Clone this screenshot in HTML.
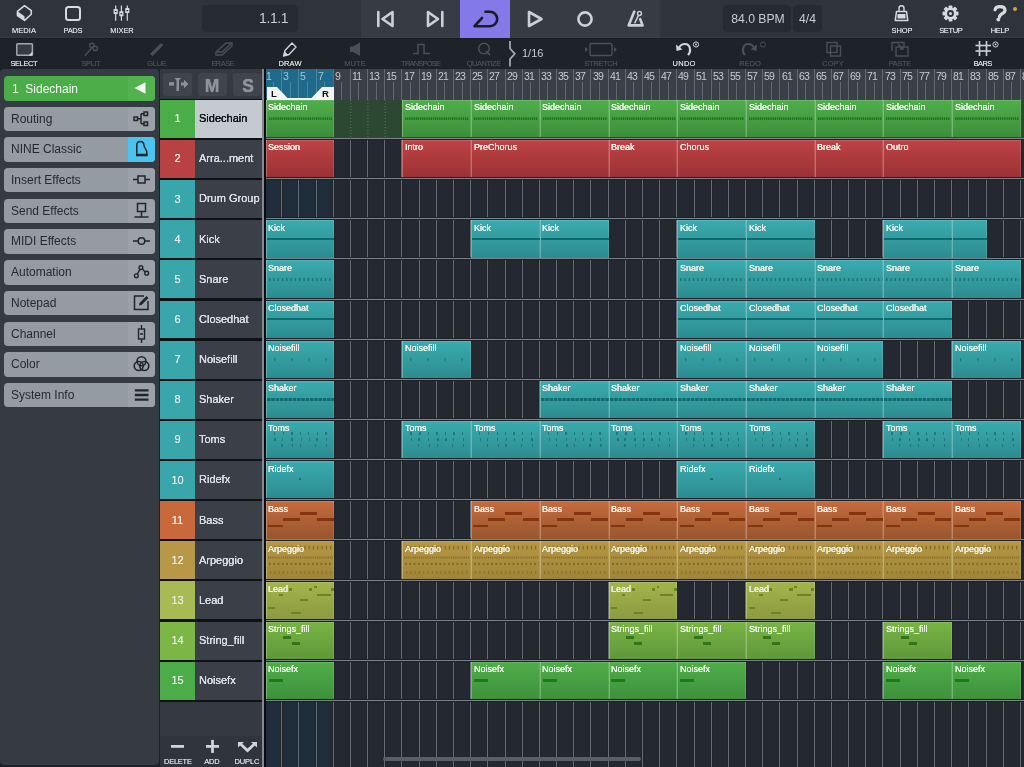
<!DOCTYPE html><html><head><meta charset="utf-8"><style>
*{margin:0;padding:0;box-sizing:border-box}
html,body{-webkit-font-smoothing:antialiased;width:1024px;height:767px;overflow:hidden;background:#1d2127;font-family:"Liberation Sans",sans-serif}
.a{position:absolute}
.lbl{position:absolute;font-size:7.5px;font-weight:normal;text-shadow:0 0 0.4px currentColor;color:#d3d6da;text-align:center;width:60px;will-change:transform}
.dim{color:#474c54}
.clip{position:absolute;overflow:hidden}
.ct{position:absolute;left:2.6px;top:2.4px;font-size:9px;font-weight:normal;text-shadow:0 0 0.4px #e9eee6,0 0 0.4px #e9eee6;color:#e9eee6;white-space:nowrap}
.tn{position:absolute;font-size:11px;font-weight:normal;text-shadow:0 0 0.5px currentColor,0 0 0.5px currentColor;color:#d9dde1;white-space:nowrap}
.num{position:absolute;font-size:11px;font-weight:normal;text-shadow:0 0 0.4px currentColor;color:#e3e9e1;text-align:center;width:35px}
.lb{position:absolute;left:4px;width:151px;height:24.4px;border-radius:4px;background:#959ba3;overflow:hidden}
.lb .r{position:absolute;right:0;top:0;width:27px;height:100%;background:#9ba1a8}
.lb .t{position:absolute;left:7.3px;top:5px;font-size:12px;color:#262a30;white-space:nowrap}
.txt,.tn,.num,.rn,.ct,.lb .t{will-change:transform}
.rn{position:absolute;top:70.3px;font-size:10.5px;color:#c8cbcf;white-space:nowrap;letter-spacing:-0.9px}
</style></head><body><div id="root" style="position:absolute;left:0;top:0;width:1024px;height:767px;overflow:hidden;transform:translateZ(0)">
<div class="a" style="left:0;top:0;width:1024px;height:38px;background:#2f343c"></div>
<div class="a" style="left:360px;top:0;width:300px;height:38px;background:#363b44"></div>
<div class="a" style="left:460px;top:0;width:50px;height:38px;background:#8379e8"></div>
<div class="a" style="left:0;top:38px;width:1024px;height:31px;background:#1e2229"></div>
<div class="a" style="left:0;top:36.5px;width:1024px;height:1.5px;background:rgba(255,255,255,0.035)"></div>
<div class="a" style="left:0;top:38px;width:1024px;height:1px;background:#191c21"></div>
<div class="a" style="left:359.5px;top:0;width:1px;height:38px;background:rgba(0,0,0,0.12)"></div>
<svg class="a" style="left:14px;top:4px" width="20" height="18" viewBox="0 0 20 18">
<path d="M10.5 1.7 L17.3 6.6 V10.2 L10.5 16.4 L3.4 11.6 V7.3 Z" fill="none" stroke="#d7dade" stroke-width="1.5" stroke-linejoin="round"/>
<path d="M3.4 7.3 L10.5 12.2 L10.5 16.4 L3.4 11.6 Z" fill="#d7dade"/>
</svg>
<div class="lbl" style="left:-5.9px;top:25.5px;letter-spacing:0.05px;text-indent:0.05px">MEDIA</div>
<div class="a" style="left:65.4px;top:5.6px;width:15.4px;height:15.2px;border:2px solid #d7dade;border-radius:3.5px"></div>
<div class="lbl" style="left:42.9px;top:25.5px;letter-spacing:-0.34px;text-indent:-0.34px">PADS</div>
<svg class="a" style="left:112px;top:4px" width="20" height="18" viewBox="0 0 20 18">
<g stroke="#d7dade" stroke-width="1.2"><line x1="3.7" y1="1.5" x2="3.7" y2="16.8"/><line x1="9.4" y1="1.5" x2="9.4" y2="16.8"/><line x1="15.3" y1="1.5" x2="15.3" y2="16.8"/></g>
<g fill="#d7dade"><rect x="1.6" y="5" width="4.2" height="5" rx="0.6"/><rect x="7.3" y="7.2" width="4.2" height="5" rx="0.6"/><rect x="13.2" y="4.1" width="4.2" height="5" rx="0.6"/></g>
<g fill="#2f343c"><rect x="2.8" y="6.9" width="1.8" height="1.2"/><rect x="8.5" y="9.1" width="1.8" height="1.2"/><rect x="14.4" y="6" width="1.8" height="1.2"/></g>
</svg>
<div class="lbl" style="left:91.6px;top:25.5px;letter-spacing:-0.05px;text-indent:-0.05px">MIXER</div>
<div class="a" style="left:202px;top:5px;width:96px;height:27px;background:#262a31;border-radius:4px"></div>
<div class="a txt" style="left:200px;top:10.3px;width:88px;text-align:right;font-size:14px;letter-spacing:-0.45px;color:#c9ccd0">1.1.1</div>
<svg class="a" style="left:370px;top:8px" width="290" height="22" viewBox="0 0 290 22">
<g fill="none" stroke="#cdd0d4" stroke-width="2.6" stroke-linejoin="round" stroke-linecap="round">
<line x1="8.3" y1="4" x2="8.3" y2="18"/><path d="M22.5 4 L12.5 11 L22.5 18 Z"/>
<path d="M58 4 L68 11 L58 18 Z"/><line x1="72.3" y1="4" x2="72.3" y2="18"/>
<path d="M159 4 L171.5 11 L159 18 Z"/>
<circle cx="215" cy="11" r="6.6"/>
</g>
<path d="M115.5 3.8 H120 A7.2 7.2 0 0 1 120 18.2 H104.5 L112 10" fill="none" stroke="#1b1d24" stroke-width="2.6" stroke-linecap="round" stroke-linejoin="round"/>
<path d="M264.3 3.6 L258.6 17.4 H272.6 L270.2 11.2" fill="none" stroke="#cdd0d4" stroke-width="2.6" stroke-linejoin="round" stroke-linecap="round"/>
<line x1="264.6" y1="15.3" x2="268.6" y2="7.2" stroke="#cdd0d4" stroke-width="1.5"/>
<circle cx="269.5" cy="5.5" r="1.9" fill="#1d1f26" stroke="#cdd0d4" stroke-width="1.5"/>
</svg>
<div class="a" style="left:723px;top:5px;width:68px;height:27px;background:#262a31;border-radius:4px"></div>
<div class="a" style="left:793px;top:5px;width:29px;height:27px;background:#262a31;border-radius:4px"></div>
<div class="a txt" style="left:723.5px;top:12px;width:68px;text-align:center;font-size:12.2px;color:#c9ccd0">84.0 BPM</div>
<div class="a txt" style="left:793px;top:12px;width:29px;text-align:center;font-size:12.2px;color:#c9ccd0">4/4</div>
<svg class="a" style="left:893px;top:4px" width="17" height="18" viewBox="0 0 17 18">
<path d="M6 7.5 V4 C6 1 11 1 11 4 V7.5" fill="none" stroke="#d7dade" stroke-width="1.4"/>
<path d="M3.5 7.5 H13.5 L14.8 16.6 H2.2 Z" fill="none" stroke="#d7dade" stroke-width="1.5" stroke-linejoin="round"/>
<rect x="4.5" y="10" width="8" height="4.5" fill="#d7dade"/>
</svg>
<div class="lbl" style="left:872.0px;top:25.5px;letter-spacing:-0.09px;text-indent:-0.09px">SHOP</div>
<svg class="a" style="left:942.2px;top:4.7px" width="17" height="17" viewBox="0 0 17 17">
<g transform="translate(8.5 8.5)" fill="#d7dade">
<circle r="6"/>
<g id="t"><rect x="-1.9" y="-8" width="3.8" height="3.5" rx="0.8"/></g>
<use href="#t" transform="rotate(45)"/><use href="#t" transform="rotate(90)"/><use href="#t" transform="rotate(135)"/>
<use href="#t" transform="rotate(180)"/><use href="#t" transform="rotate(225)"/><use href="#t" transform="rotate(270)"/><use href="#t" transform="rotate(315)"/>
<circle r="3.4" fill="#2f343c"/><circle r="1.5" fill="#d7dade"/>
</g></svg>
<div class="lbl" style="left:920.7px;top:25.5px;letter-spacing:-0.38px;text-indent:-0.38px">SETUP</div>
<svg class="a" style="left:990px;top:4px" width="20" height="20" viewBox="0 0 20 20">
<path d="M5 5.8 C5.5 3.3 7.5 2.6 10 2.6 C13 2.6 15 4 15 6.3 C15 8.6 12.8 9.3 11.2 10.3 C10 11 9.6 11.8 9.4 13" fill="none" stroke="#d7dade" stroke-width="3.2" stroke-linecap="round"/>
<circle cx="8.3" cy="15.6" r="1.9" fill="#d7dade"/>
</svg>
<div class="a" style="left:1013px;top:6.5px;width:4px;height:4px;border-radius:2px;background:#d3a53c"></div>
<div class="lbl" style="left:969.5px;top:25.5px;letter-spacing:-0.28px;text-indent:-0.28px">HELP</div>
<div class="lbl" style="left:-5.8px;top:58.8px;letter-spacing:-0.41px;text-indent:-0.41px">SELECT</div>
<div class="lbl dim" style="left:60.6px;top:58.8px;letter-spacing:-0.43px;text-indent:-0.43px">SPLIT</div>
<div class="lbl dim" style="left:126.6px;top:58.8px;letter-spacing:-0.33px;text-indent:-0.33px">GLUE</div>
<div class="lbl dim" style="left:193.0px;top:58.8px;letter-spacing:-0.55px;text-indent:-0.55px">ERASE</div>
<div class="lbl" style="left:259.5px;top:58.8px;letter-spacing:0.14px;text-indent:0.14px">DRAW</div>
<div class="lbl dim" style="left:325.0px;top:58.8px;letter-spacing:0.06px;text-indent:0.06px">MUTE</div>
<div class="lbl dim" style="left:391.3px;top:58.8px;letter-spacing:-0.81px;text-indent:-0.81px">TRANSPOSE</div>
<div class="lbl dim" style="left:454.0px;top:58.8px;letter-spacing:-0.50px;text-indent:-0.50px">QUANTIZE</div>
<div class="lbl dim" style="left:571.0px;top:58.8px;letter-spacing:-0.32px;text-indent:-0.32px">STRETCH</div>
<div class="lbl" style="left:653.5px;top:58.8px;letter-spacing:0.25px;text-indent:0.25px">UNDO</div>
<div class="lbl dim" style="left:720.0px;top:58.8px;letter-spacing:-0.04px;text-indent:-0.04px">REDO</div>
<div class="lbl dim" style="left:803.4px;top:58.8px;letter-spacing:0.01px;text-indent:0.01px">COPY</div>
<div class="lbl dim" style="left:869.5px;top:58.8px;letter-spacing:-0.43px;text-indent:-0.43px">PASTE</div>
<div class="lbl" style="left:953.0px;top:58.8px;letter-spacing:-0.62px;text-indent:-0.62px">BARS</div>
<svg class="a" style="left:0;top:38px" width="1024" height="30" viewBox="0 0 1024 30">
<rect x="16.8" y="5.7" width="15.6" height="11.6" rx="0.8" fill="#363b44" stroke="#a3a8ae" stroke-width="1.5"/>
<path d="M28.6 17.4 L32.4 13.6 L32.4 17.4 Z" fill="#d3d6da"/>
<g fill="none" stroke="#4d525a" stroke-width="1.3" stroke-linecap="round">
<circle cx="91.8" cy="7.3" r="2.2"/><circle cx="95.3" cy="10.3" r="2.2"/><line x1="85.3" y1="17.3" x2="91.6" y2="10.2"/>
</g>
<path d="M150 16 L160 6 C161.5 4.5 164 6 162.5 8 L152.5 18 Z" fill="#4b5058"/>
<path d="M216 14 L226 5 L232 5 L232 8 L222 17 L216 17 Z" fill="none" stroke="#4b5058" stroke-width="1.4"/>
<path d="M216 14 L222 14 L232 5" fill="none" stroke="#4b5058" stroke-width="1.4"/>
<path d="M283.5 18 L285 12.5 L292 5 L296 9 L289 16.5 Z" fill="none" stroke="#d0d3d7" stroke-width="1.4" stroke-linejoin="round"/>
<path d="M283.5 18 L284.8 13.5 L288.5 17 Z" fill="#d0d3d7"/>
<path d="M350 8.5 L353 8.5 L360 4.5 L360 18 L353 14 L350 14 Z" fill="#4b5058"/>
<path d="M413 15.5 L418 15.5 L418 6.5 L424 6.5 L424 15.5 L430 15.5" fill="none" stroke="#4b5058" stroke-width="1.5"/>
<circle cx="484" cy="10.5" r="5.3" fill="none" stroke="#4b5058" stroke-width="1.5"/><line x1="486" y1="13" x2="490" y2="17" stroke="#4b5058" stroke-width="1.6"/>
<path d="M510 3 V10.5 L514.8 15.8 L510 21.1 V28.6" fill="none" stroke="#a3a7ac" stroke-width="1.8"/>
<rect x="590" y="5.5" width="22" height="12" rx="1.5" fill="none" stroke="#4b5058" stroke-width="1.4"/>
<path d="M588 11.5 L585 9 L585 14 Z M614 9 L617 11.5 L614 14 Z" fill="#4b5058"/>
<path d="M679 10 C681 5 689 4 690 11 C690.5 14 689 16 688 17" fill="none" stroke="#d0d3d7" stroke-width="2.2"/>
<path d="M676 6.5 L676.5 13 L682.5 11.5 Z" fill="#d0d3d7"/>
<circle cx="696" cy="6.5" r="2.6" fill="none" stroke="#d0d3d7" stroke-width="1"/><circle cx="696" cy="6.5" r="0.9" fill="#d0d3d7"/>
<path d="M754 10 C752 5 744 4 743 11 C742.5 14 744 16 745 17" fill="none" stroke="#4b5058" stroke-width="2.2"/>
<path d="M757 6.5 L756.5 13 L750.5 11.5 Z" fill="#4b5058"/>
<circle cx="763" cy="6.5" r="2.6" fill="none" stroke="#4b5058" stroke-width="1"/>
<g fill="none" stroke="#4b5058" stroke-width="1.4"><rect x="827" y="4.5" width="10" height="10"/><rect x="830.5" y="8" width="10" height="10"/></g>
<g fill="none" stroke="#4b5058" stroke-width="1.4"><path d="M892 13 L892 4.5 L904 4.5 L904 8"/><rect x="896" y="9" width="12" height="9"/><path d="M898 6 L903 11 M903 8 L903 11 L900 11"/></g>
<g stroke="#cdd0d4" stroke-width="1.6"><line x1="975.5" y1="7.5" x2="991" y2="7.5"/><line x1="975.5" y1="13" x2="991" y2="13"/><line x1="979.5" y1="3" x2="979.5" y2="18"/><line x1="986.5" y1="3" x2="986.5" y2="18"/></g>
<circle cx="995.5" cy="6.5" r="2.6" fill="none" stroke="#d0d3d7" stroke-width="1"/><circle cx="995.5" cy="6.5" r="0.9" fill="#d0d3d7"/>
</svg>
<div class="a txt" style="left:521.5px;top:46.5px;font-size:11px;color:#c9ccd0">1/16</div>
<div class="a" style="left:0;top:69px;width:158.7px;height:696px;background:#353a43;border-radius:4px"></div>
<div class="a" style="left:4px;top:75.8px;width:151px;height:24.9px;border-radius:4px;background:#4bad48;overflow:hidden"><div class="a" style="right:0;top:0;width:27px;height:100%;background:#52b34e"></div></div>
<svg class="a" style="left:134px;top:82px" width="12" height="12" viewBox="0 0 12 12"><path d="M0.5 6 L11.5 0.3 L11.5 11.7 Z" fill="#f2f5f2"/></svg>
<div class="a txt" style="left:11.5px;top:81.7px;font-size:12px;color:#f2f5f2;white-space:nowrap">1&nbsp;&nbsp;Sidechain</div>
<div class="lb" style="top:106.53px"><div class="r"></div><div class="t">Routing</div></div>
<div class="lb" style="top:137.26px"><div class="a" style="right:0;top:0;width:27px;height:100%;background:#4cc3ee"></div><div class="t">NINE Classic</div></div>
<div class="lb" style="top:167.99px"><div class="r"></div><div class="t">Insert Effects</div></div>
<div class="lb" style="top:198.72px"><div class="r"></div><div class="t">Send Effects</div></div>
<div class="lb" style="top:229.45px"><div class="r"></div><div class="t">MIDI Effects</div></div>
<div class="lb" style="top:260.18px"><div class="r"></div><div class="t">Automation</div></div>
<div class="lb" style="top:290.91px"><div class="r"></div><div class="t">Notepad</div></div>
<div class="lb" style="top:321.64px"><div class="r"></div><div class="t">Channel</div></div>
<div class="lb" style="top:352.37px"><div class="r"></div><div class="t">Color</div></div>
<div class="lb" style="top:383.10px"><div class="r"></div><div class="t">System Info</div></div>
<svg class="a" style="left:128px;top:106.53px" width="27" height="24" viewBox="0 0 27 24"><g stroke="#22262c" fill="none" stroke-width="1.5"><rect x="6" y="10" width="3.5" height="3.5"/><rect x="16" y="5" width="3.5" height="3.5"/><rect x="16" y="15" width="3.5" height="3.5"/><path d="M9.5 11.8 H13 M13 6.8 V16.8 M13 6.8 H16 M13 16.8 H16"/></g></svg>
<svg class="a" style="left:128px;top:137.26px" width="27" height="24" viewBox="0 0 27 24"><path d="M8.8 17.5 V8.2 C8.8 5.2 10.5 4.6 12.4 4.6 C15 4.6 15.9 6.6 16.2 9 C16.5 11.6 18.8 12.3 18.8 15 V17.5 Z" stroke="#22262c" fill="none" stroke-width="1.5" stroke-linejoin="round"/><rect x="8" y="17" width="11.6" height="2.3" fill="#22262c"/></svg>
<svg class="a" style="left:128px;top:167.99px" width="27" height="24" viewBox="0 0 27 24"><g stroke="#22262c" fill="none" stroke-width="1.5"><rect x="10" y="8" width="7" height="7"/><path d="M5 11.5 H10 M17 11.5 H22"/></g></svg>
<svg class="a" style="left:128px;top:198.72px" width="27" height="24" viewBox="0 0 27 24"><g stroke="#22262c" fill="none" stroke-width="1.5"><rect x="9.5" y="4.5" width="8" height="8"/><path d="M13.5 12.5 V18 M6.5 18 H20.5"/></g></svg>
<svg class="a" style="left:128px;top:229.45px" width="27" height="24" viewBox="0 0 27 24"><g stroke="#22262c" fill="none" stroke-width="1.5"><circle cx="13.5" cy="12" r="3.3"/><path d="M5 12 H10 M17 12 H22"/></g></svg>
<svg class="a" style="left:128px;top:260.18px" width="27" height="24" viewBox="0 0 27 24"><g stroke="#22262c" fill="none" stroke-width="1.4"><circle cx="8.3" cy="15.8" r="1.9"/><circle cx="12.9" cy="7.6" r="1.9"/><circle cx="18.7" cy="13.2" r="1.9"/><path d="M9.2 14.1 L12 9.3 M14.3 8.9 L17.3 11.9"/></g></svg>
<svg class="a" style="left:128px;top:290.91px" width="27" height="24" viewBox="0 0 27 24"><g stroke="#22262c" fill="none" stroke-width="1.5"><path d="M16 5 H6.5 V18.5 H20 V10"/></g><path d="M11 14.5 L11.5 12 L18.5 5 L20.5 7 L13.5 14 Z" fill="#22262c"/></svg>
<svg class="a" style="left:128px;top:321.64px" width="27" height="24" viewBox="0 0 27 24"><g stroke="#22262c" fill="none" stroke-width="1.4"><rect x="10.5" y="7" width="6" height="10"/><path d="M13.5 3 V7 M13.5 17 V21 M12 12 H15"/></g></svg>
<svg class="a" style="left:128px;top:352.37px" width="27" height="24" viewBox="0 0 27 24"><g stroke="#22262c" fill="none" stroke-width="1.6"><circle cx="13.5" cy="9.2" r="4.5"/><circle cx="10.7" cy="14" r="4.5"/><circle cx="16.3" cy="14" r="4.5"/></g></svg>
<svg class="a" style="left:128px;top:383.10px" width="27" height="24" viewBox="0 0 27 24"><g stroke="#22262c" stroke-width="2.3"><path d="M6.8 7.3 H20.5 M6.8 12 H20.5 M6.8 16.7 H20.5"/></g></svg>
<div class="a" style="left:160px;top:69px;width:102.5px;height:698px;background:#343942"></div>
<div class="a" style="left:163.4px;top:72.8px;width:28.9px;height:22.8px;background:#3f444d;border-radius:3px"></div>
<div class="a" style="left:198.4px;top:72.8px;width:28.3px;height:22.8px;background:#3f444d;border-radius:3px"></div>
<div class="a" style="left:233.0px;top:72.8px;width:28.0px;height:22.8px;background:#3f444d;border-radius:3px"></div>
<div class="a txt" style="left:198.4px;top:75.5px;width:28.3px;text-align:center;font-size:17.5px;font-weight:bold;text-shadow:0 0 0.7px #8d939a,0 0 0.7px #8d939a;color:#8d939a">M</div>
<div class="a txt" style="left:233.5px;top:75.5px;width:28px;text-align:center;font-size:17.5px;font-weight:bold;text-shadow:0 0 0.7px #8d939a,0 0 0.7px #8d939a;color:#8d939a">S</div>
<svg class="a" style="left:167px;top:76px" width="22" height="16" viewBox="0 0 22 16">
<rect x="2" y="6.2" width="5" height="3.4" fill="#8d939a"/>
<path d="M7.5 2 H14 L12 4.2 V15 H9.5 V4.2 Z" fill="#8d939a"/>
<path d="M14 6.5 H17 V3.8 L21.5 8 L17 12.2 V9.5 H14 Z" fill="#8d939a"/>
</svg>
<div class="a" style="left:160px;top:99px;width:102.5px;height:603.1px;background:#0f1114"></div>
<div class="a" style="left:160.3px;top:99.80px;width:34.8px;height:37.9px;background:#4bad48"></div>
<div class="a" style="left:195.1px;top:99.80px;width:67.4px;height:37.9px;background:#c5cad1"></div>
<div class="num" style="left:160.3px;top:112.30px">1</div>
<div class="tn" style="left:198.5px;top:112.10px;color:#15181c">Sidechain</div>
<div class="a" style="left:160.3px;top:139.94px;width:34.8px;height:37.9px;background:#b84144"></div>
<div class="a" style="left:195.1px;top:139.94px;width:67.4px;height:37.9px;background:#3a3f48"></div>
<div class="num" style="left:160.3px;top:152.44px">2</div>
<div class="tn" style="left:198.5px;top:152.24px;color:#d9dde1">Arra...ment</div>
<div class="a" style="left:160.3px;top:180.08px;width:34.8px;height:37.9px;background:#38a6aa"></div>
<div class="a" style="left:195.1px;top:180.08px;width:67.4px;height:37.9px;background:#3a3f48"></div>
<div class="num" style="left:160.3px;top:192.58px">3</div>
<div class="tn" style="left:198.5px;top:192.38px;color:#d9dde1">Drum Group</div>
<div class="a" style="left:160.3px;top:220.22px;width:34.8px;height:37.9px;background:#38a6aa"></div>
<div class="a" style="left:195.1px;top:220.22px;width:67.4px;height:37.9px;background:#3a3f48"></div>
<div class="num" style="left:160.3px;top:232.72px">4</div>
<div class="tn" style="left:198.5px;top:232.52px;color:#d9dde1">Kick</div>
<div class="a" style="left:160.3px;top:260.36px;width:34.8px;height:37.9px;background:#38a6aa"></div>
<div class="a" style="left:195.1px;top:260.36px;width:67.4px;height:37.9px;background:#3a3f48"></div>
<div class="num" style="left:160.3px;top:272.86px">5</div>
<div class="tn" style="left:198.5px;top:272.66px;color:#d9dde1">Snare</div>
<div class="a" style="left:160.3px;top:300.50px;width:34.8px;height:37.9px;background:#38a6aa"></div>
<div class="a" style="left:195.1px;top:300.50px;width:67.4px;height:37.9px;background:#3a3f48"></div>
<div class="num" style="left:160.3px;top:313.00px">6</div>
<div class="tn" style="left:198.5px;top:312.80px;color:#d9dde1">Closedhat</div>
<div class="a" style="left:160.3px;top:340.64px;width:34.8px;height:37.9px;background:#38a6aa"></div>
<div class="a" style="left:195.1px;top:340.64px;width:67.4px;height:37.9px;background:#3a3f48"></div>
<div class="num" style="left:160.3px;top:353.14px">7</div>
<div class="tn" style="left:198.5px;top:352.94px;color:#d9dde1">Noisefill</div>
<div class="a" style="left:160.3px;top:380.78px;width:34.8px;height:37.9px;background:#38a6aa"></div>
<div class="a" style="left:195.1px;top:380.78px;width:67.4px;height:37.9px;background:#3a3f48"></div>
<div class="num" style="left:160.3px;top:393.28px">8</div>
<div class="tn" style="left:198.5px;top:393.08px;color:#d9dde1">Shaker</div>
<div class="a" style="left:160.3px;top:420.92px;width:34.8px;height:37.9px;background:#38a6aa"></div>
<div class="a" style="left:195.1px;top:420.92px;width:67.4px;height:37.9px;background:#3a3f48"></div>
<div class="num" style="left:160.3px;top:433.42px">9</div>
<div class="tn" style="left:198.5px;top:433.22px;color:#d9dde1">Toms</div>
<div class="a" style="left:160.3px;top:461.06px;width:34.8px;height:37.9px;background:#38a6aa"></div>
<div class="a" style="left:195.1px;top:461.06px;width:67.4px;height:37.9px;background:#3a3f48"></div>
<div class="num" style="left:160.3px;top:473.56px">10</div>
<div class="tn" style="left:198.5px;top:473.36px;color:#d9dde1">Ridefx</div>
<div class="a" style="left:160.3px;top:501.20px;width:34.8px;height:37.9px;background:#c8683b"></div>
<div class="a" style="left:195.1px;top:501.20px;width:67.4px;height:37.9px;background:#3a3f48"></div>
<div class="num" style="left:160.3px;top:513.70px">11</div>
<div class="tn" style="left:198.5px;top:513.50px;color:#d9dde1">Bass</div>
<div class="a" style="left:160.3px;top:541.34px;width:34.8px;height:37.9px;background:#b89847"></div>
<div class="a" style="left:195.1px;top:541.34px;width:67.4px;height:37.9px;background:#3a3f48"></div>
<div class="num" style="left:160.3px;top:553.84px">12</div>
<div class="tn" style="left:198.5px;top:553.64px;color:#d9dde1">Arpeggio</div>
<div class="a" style="left:160.3px;top:581.48px;width:34.8px;height:37.9px;background:#a8ba54"></div>
<div class="a" style="left:195.1px;top:581.48px;width:67.4px;height:37.9px;background:#3a3f48"></div>
<div class="num" style="left:160.3px;top:593.98px">13</div>
<div class="tn" style="left:198.5px;top:593.78px;color:#d9dde1">Lead</div>
<div class="a" style="left:160.3px;top:621.62px;width:34.8px;height:37.9px;background:#7cb644"></div>
<div class="a" style="left:195.1px;top:621.62px;width:67.4px;height:37.9px;background:#3a3f48"></div>
<div class="num" style="left:160.3px;top:634.12px">14</div>
<div class="tn" style="left:198.5px;top:633.92px;color:#d9dde1">String_fill</div>
<div class="a" style="left:160.3px;top:661.76px;width:34.8px;height:37.9px;background:#4cad48"></div>
<div class="a" style="left:195.1px;top:661.76px;width:67.4px;height:37.9px;background:#3a3f48"></div>
<div class="num" style="left:160.3px;top:674.26px">15</div>
<div class="tn" style="left:198.5px;top:674.06px;color:#d9dde1">Noisefx</div>
<div class="a" style="left:160px;top:735.5px;width:102px;height:31.5px;background:#30353d"></div>
<svg class="a" style="left:160px;top:735px" width="103" height="22" viewBox="0 0 103 22">
<rect x="11" y="10" width="13" height="2.8" fill="#d0d3d7"/>
<rect x="46" y="10" width="13" height="2.8" fill="#d0d3d7"/><rect x="51.1" y="4.9" width="2.8" height="13" fill="#d0d3d7"/>
<path d="M80 8.5 L87.5 15.5 L95 8.5" fill="none" stroke="#d0d3d7" stroke-width="2.8" stroke-linejoin="miter"/><path d="M78 7 L84 7 L78 12.5 Z M97 7 L91 7 L97 12.5 Z" fill="#d0d3d7"/>
</svg>
<div class="lbl" style="left:147.5px;top:756.6px;letter-spacing:-0.25px;text-indent:-0.25px">DELETE</div>
<div class="lbl" style="left:182.0px;top:756.6px;letter-spacing:-0.22px;text-indent:-0.22px">ADD</div>
<div class="lbl" style="left:217.0px;top:756.6px;letter-spacing:-0.15px;text-indent:-0.15px">DUPLC</div>
<div class="a" style="left:266px;top:100px;width:758px;height:667px;background:#242931"></div>
<div class="a" style="left:265.0px;top:100px;width:68.7px;height:667px;background:#1f2d3a"></div>
<svg class="a" style="left:0;top:0" width="1024" height="767" viewBox="0 0 1024 767"><path d="M281.5 100V767M298.5 100V767M316.5 100V767M333.5 100V767M350.5 100V767M367.5 100V767M384.5 100V767M401.5 100V767M419.5 100V767M436.5 100V767M453.5 100V767M470.5 100V767M487.5 100V767M505.5 100V767M522.5 100V767M539.5 100V767M556.5 100V767M573.5 100V767M590.5 100V767M608.5 100V767M625.5 100V767M642.5 100V767M659.5 100V767M676.5 100V767M694.5 100V767M711.5 100V767M728.5 100V767M745.5 100V767M762.5 100V767M779.5 100V767M797.5 100V767M814.5 100V767M831.5 100V767M848.5 100V767M865.5 100V767M882.5 100V767M900.5 100V767M917.5 100V767M934.5 100V767M951.5 100V767M968.5 100V767M986.5 100V767M1003.5 100V767M1020.5 100V767" stroke="#21252b" stroke-width="3"/><path d="M281.5 100V767M298.5 100V767M316.5 100V767M333.5 100V767M350.5 100V767M367.5 100V767M384.5 100V767M401.5 100V767M419.5 100V767M436.5 100V767M453.5 100V767M470.5 100V767M487.5 100V767M505.5 100V767M522.5 100V767M539.5 100V767M556.5 100V767M573.5 100V767M590.5 100V767M608.5 100V767M625.5 100V767M642.5 100V767M659.5 100V767M676.5 100V767M694.5 100V767M711.5 100V767M728.5 100V767M745.5 100V767M762.5 100V767M779.5 100V767M797.5 100V767M814.5 100V767M831.5 100V767M848.5 100V767M865.5 100V767M882.5 100V767M900.5 100V767M917.5 100V767M934.5 100V767M951.5 100V767M968.5 100V767M986.5 100V767M1003.5 100V767M1020.5 100V767" stroke="#686e75" stroke-width="1"/><path d="M266 138.5H1024M266 178.5H1024M266 218.5H1024M266 258.5H1024M266 299.5H1024M266 339.5H1024M266 379.5H1024M266 419.5H1024M266 459.5H1024M266 499.5H1024M266 539.5H1024M266 580.5H1024M266 620.5H1024M266 660.5H1024M266 700.5H1024" stroke="#1e2228" stroke-width="3"/><path d="M266 138.5H1024M266 178.5H1024M266 218.5H1024M266 258.5H1024M266 299.5H1024M266 339.5H1024M266 379.5H1024M266 419.5H1024M266 459.5H1024M266 499.5H1024M266 539.5H1024M266 580.5H1024M266 620.5H1024M266 660.5H1024M266 700.5H1024" stroke="#7d838a" stroke-width="1.1"/></svg>
<div class="a" style="left:266px;top:100px;width:758px;height:37.6px;background:#2c4832"></div>
<svg class="a" style="left:0;top:100px" width="1024" height="38" viewBox="0 100 1024 38"><path d="M282.08 100V137.6M299.26 100V137.6M316.44 100V137.6M333.62 100V137.6M350.80 100V137.6M367.98 100V137.6M385.16 100V137.6M402.34 100V137.6M419.52 100V137.6M436.70 100V137.6M453.88 100V137.6M471.06 100V137.6M488.24 100V137.6M505.42 100V137.6M522.60 100V137.6M539.78 100V137.6M556.96 100V137.6M574.14 100V137.6M591.32 100V137.6M608.50 100V137.6M625.68 100V137.6M642.86 100V137.6M660.04 100V137.6M677.22 100V137.6M694.40 100V137.6M711.58 100V137.6M728.76 100V137.6M745.94 100V137.6M763.12 100V137.6M780.30 100V137.6M797.48 100V137.6M814.66 100V137.6M831.84 100V137.6M849.02 100V137.6M866.20 100V137.6M883.38 100V137.6M900.56 100V137.6M917.74 100V137.6M934.92 100V137.6M952.10 100V137.6M969.28 100V137.6M986.46 100V137.6M1003.64 100V137.6M1020.82 100V137.6" stroke="#4f7a68" stroke-width="1" stroke-dasharray="1 2"/></svg>
<div class="a" style="left:266px;top:69px;width:758px;height:31px;background:#3a3f48"></div>
<div class="a" style="left:265.0px;top:69px;width:68.7px;height:29px;background:#1f6a8b"></div>
<div class="rn" style="left:266.10px;color:#a6c3d0">1</div>
<div class="a" style="left:280.8px;top:69px;width:1.5px;height:31px;background:#4a84a0"></div>
<div class="rn" style="left:283.28px;color:#a6c3d0">3</div>
<div class="a" style="left:297.8px;top:69px;width:1.5px;height:31px;background:#4a84a0"></div>
<div class="rn" style="left:300.46px;color:#a6c3d0">5</div>
<div class="a" style="left:315.8px;top:69px;width:1.5px;height:31px;background:#4a84a0"></div>
<div class="rn" style="left:317.64px;color:#a6c3d0">7</div>
<div class="a" style="left:332.8px;top:69px;width:1.5px;height:31px;background:#62686f"></div>
<div class="rn" style="left:334.82px">9</div>
<div class="a" style="left:349.8px;top:69px;width:1.5px;height:31px;background:#62686f"></div>
<div class="rn" style="left:352.00px">11</div>
<div class="a" style="left:366.8px;top:69px;width:1.5px;height:31px;background:#62686f"></div>
<div class="rn" style="left:369.18px">13</div>
<div class="a" style="left:383.8px;top:69px;width:1.5px;height:31px;background:#62686f"></div>
<div class="rn" style="left:386.36px">15</div>
<div class="a" style="left:400.8px;top:69px;width:1.5px;height:31px;background:#62686f"></div>
<div class="rn" style="left:403.54px">17</div>
<div class="a" style="left:418.8px;top:69px;width:1.5px;height:31px;background:#62686f"></div>
<div class="rn" style="left:420.72px">19</div>
<div class="a" style="left:435.8px;top:69px;width:1.5px;height:31px;background:#62686f"></div>
<div class="rn" style="left:437.90px">21</div>
<div class="a" style="left:452.8px;top:69px;width:1.5px;height:31px;background:#62686f"></div>
<div class="rn" style="left:455.08px">23</div>
<div class="a" style="left:469.8px;top:69px;width:1.5px;height:31px;background:#62686f"></div>
<div class="rn" style="left:472.26px">25</div>
<div class="a" style="left:486.8px;top:69px;width:1.5px;height:31px;background:#62686f"></div>
<div class="rn" style="left:489.44px">27</div>
<div class="a" style="left:504.8px;top:69px;width:1.5px;height:31px;background:#62686f"></div>
<div class="rn" style="left:506.62px">29</div>
<div class="a" style="left:521.8px;top:69px;width:1.5px;height:31px;background:#62686f"></div>
<div class="rn" style="left:523.80px">31</div>
<div class="a" style="left:538.8px;top:69px;width:1.5px;height:31px;background:#62686f"></div>
<div class="rn" style="left:540.98px">33</div>
<div class="a" style="left:555.8px;top:69px;width:1.5px;height:31px;background:#62686f"></div>
<div class="rn" style="left:558.16px">35</div>
<div class="a" style="left:572.8px;top:69px;width:1.5px;height:31px;background:#62686f"></div>
<div class="rn" style="left:575.34px">37</div>
<div class="a" style="left:589.8px;top:69px;width:1.5px;height:31px;background:#62686f"></div>
<div class="rn" style="left:592.52px">39</div>
<div class="a" style="left:607.8px;top:69px;width:1.5px;height:31px;background:#62686f"></div>
<div class="rn" style="left:609.70px">41</div>
<div class="a" style="left:624.8px;top:69px;width:1.5px;height:31px;background:#62686f"></div>
<div class="rn" style="left:626.88px">43</div>
<div class="a" style="left:641.8px;top:69px;width:1.5px;height:31px;background:#62686f"></div>
<div class="rn" style="left:644.06px">45</div>
<div class="a" style="left:658.8px;top:69px;width:1.5px;height:31px;background:#62686f"></div>
<div class="rn" style="left:661.24px">47</div>
<div class="a" style="left:675.8px;top:69px;width:1.5px;height:31px;background:#62686f"></div>
<div class="rn" style="left:678.42px">49</div>
<div class="a" style="left:693.8px;top:69px;width:1.5px;height:31px;background:#62686f"></div>
<div class="rn" style="left:695.60px">51</div>
<div class="a" style="left:710.8px;top:69px;width:1.5px;height:31px;background:#62686f"></div>
<div class="rn" style="left:712.78px">53</div>
<div class="a" style="left:727.8px;top:69px;width:1.5px;height:31px;background:#62686f"></div>
<div class="rn" style="left:729.96px">55</div>
<div class="a" style="left:744.8px;top:69px;width:1.5px;height:31px;background:#62686f"></div>
<div class="rn" style="left:747.14px">57</div>
<div class="a" style="left:761.8px;top:69px;width:1.5px;height:31px;background:#62686f"></div>
<div class="rn" style="left:764.32px">59</div>
<div class="a" style="left:778.8px;top:69px;width:1.5px;height:31px;background:#62686f"></div>
<div class="rn" style="left:781.50px">61</div>
<div class="a" style="left:796.8px;top:69px;width:1.5px;height:31px;background:#62686f"></div>
<div class="rn" style="left:798.68px">63</div>
<div class="a" style="left:813.8px;top:69px;width:1.5px;height:31px;background:#62686f"></div>
<div class="rn" style="left:815.86px">65</div>
<div class="a" style="left:830.8px;top:69px;width:1.5px;height:31px;background:#62686f"></div>
<div class="rn" style="left:833.04px">67</div>
<div class="a" style="left:847.8px;top:69px;width:1.5px;height:31px;background:#62686f"></div>
<div class="rn" style="left:850.22px">69</div>
<div class="a" style="left:864.8px;top:69px;width:1.5px;height:31px;background:#62686f"></div>
<div class="rn" style="left:867.40px">71</div>
<div class="a" style="left:881.8px;top:69px;width:1.5px;height:31px;background:#62686f"></div>
<div class="rn" style="left:884.58px">73</div>
<div class="a" style="left:899.8px;top:69px;width:1.5px;height:31px;background:#62686f"></div>
<div class="rn" style="left:901.76px">75</div>
<div class="a" style="left:916.8px;top:69px;width:1.5px;height:31px;background:#62686f"></div>
<div class="rn" style="left:918.94px">77</div>
<div class="a" style="left:933.8px;top:69px;width:1.5px;height:31px;background:#62686f"></div>
<div class="rn" style="left:936.12px">79</div>
<div class="a" style="left:950.8px;top:69px;width:1.5px;height:31px;background:#62686f"></div>
<div class="rn" style="left:953.30px">81</div>
<div class="a" style="left:967.8px;top:69px;width:1.5px;height:31px;background:#62686f"></div>
<div class="rn" style="left:970.48px">83</div>
<div class="a" style="left:985.8px;top:69px;width:1.5px;height:31px;background:#62686f"></div>
<div class="rn" style="left:987.66px">85</div>
<div class="a" style="left:1002.8px;top:69px;width:1.5px;height:31px;background:#62686f"></div>
<div class="rn" style="left:1004.84px">87</div>
<div class="a" style="left:1019.8px;top:69px;width:1.5px;height:31px;background:#62686f"></div>
<div class="rn" style="left:1022.02px">89</div>
<div class="a" style="left:272.8px;top:82.3px;width:1.5px;height:17.7px;background:#4a84a0"></div>
<div class="a" style="left:289.8px;top:82.3px;width:1.5px;height:17.7px;background:#4a84a0"></div>
<div class="a" style="left:306.8px;top:82.3px;width:1.5px;height:17.7px;background:#4a84a0"></div>
<div class="a" style="left:323.8px;top:82.3px;width:1.5px;height:17.7px;background:#4a84a0"></div>
<div class="a" style="left:340.8px;top:82.3px;width:1.5px;height:17.7px;background:#62686f"></div>
<div class="a" style="left:357.8px;top:82.3px;width:1.5px;height:17.7px;background:#62686f"></div>
<div class="a" style="left:375.8px;top:82.3px;width:1.5px;height:17.7px;background:#62686f"></div>
<div class="a" style="left:392.8px;top:82.3px;width:1.5px;height:17.7px;background:#62686f"></div>
<div class="a" style="left:409.8px;top:82.3px;width:1.5px;height:17.7px;background:#62686f"></div>
<div class="a" style="left:426.8px;top:82.3px;width:1.5px;height:17.7px;background:#62686f"></div>
<div class="a" style="left:443.8px;top:82.3px;width:1.5px;height:17.7px;background:#62686f"></div>
<div class="a" style="left:461.8px;top:82.3px;width:1.5px;height:17.7px;background:#62686f"></div>
<div class="a" style="left:478.8px;top:82.3px;width:1.5px;height:17.7px;background:#62686f"></div>
<div class="a" style="left:495.8px;top:82.3px;width:1.5px;height:17.7px;background:#62686f"></div>
<div class="a" style="left:512.8px;top:82.3px;width:1.5px;height:17.7px;background:#62686f"></div>
<div class="a" style="left:529.8px;top:82.3px;width:1.5px;height:17.7px;background:#62686f"></div>
<div class="a" style="left:546.8px;top:82.3px;width:1.5px;height:17.7px;background:#62686f"></div>
<div class="a" style="left:564.8px;top:82.3px;width:1.5px;height:17.7px;background:#62686f"></div>
<div class="a" style="left:581.8px;top:82.3px;width:1.5px;height:17.7px;background:#62686f"></div>
<div class="a" style="left:598.8px;top:82.3px;width:1.5px;height:17.7px;background:#62686f"></div>
<div class="a" style="left:615.8px;top:82.3px;width:1.5px;height:17.7px;background:#62686f"></div>
<div class="a" style="left:632.8px;top:82.3px;width:1.5px;height:17.7px;background:#62686f"></div>
<div class="a" style="left:650.8px;top:82.3px;width:1.5px;height:17.7px;background:#62686f"></div>
<div class="a" style="left:667.8px;top:82.3px;width:1.5px;height:17.7px;background:#62686f"></div>
<div class="a" style="left:684.8px;top:82.3px;width:1.5px;height:17.7px;background:#62686f"></div>
<div class="a" style="left:701.8px;top:82.3px;width:1.5px;height:17.7px;background:#62686f"></div>
<div class="a" style="left:718.8px;top:82.3px;width:1.5px;height:17.7px;background:#62686f"></div>
<div class="a" style="left:735.8px;top:82.3px;width:1.5px;height:17.7px;background:#62686f"></div>
<div class="a" style="left:753.8px;top:82.3px;width:1.5px;height:17.7px;background:#62686f"></div>
<div class="a" style="left:770.8px;top:82.3px;width:1.5px;height:17.7px;background:#62686f"></div>
<div class="a" style="left:787.8px;top:82.3px;width:1.5px;height:17.7px;background:#62686f"></div>
<div class="a" style="left:804.8px;top:82.3px;width:1.5px;height:17.7px;background:#62686f"></div>
<div class="a" style="left:821.8px;top:82.3px;width:1.5px;height:17.7px;background:#62686f"></div>
<div class="a" style="left:839.8px;top:82.3px;width:1.5px;height:17.7px;background:#62686f"></div>
<div class="a" style="left:856.8px;top:82.3px;width:1.5px;height:17.7px;background:#62686f"></div>
<div class="a" style="left:873.8px;top:82.3px;width:1.5px;height:17.7px;background:#62686f"></div>
<div class="a" style="left:890.8px;top:82.3px;width:1.5px;height:17.7px;background:#62686f"></div>
<div class="a" style="left:907.8px;top:82.3px;width:1.5px;height:17.7px;background:#62686f"></div>
<div class="a" style="left:924.8px;top:82.3px;width:1.5px;height:17.7px;background:#62686f"></div>
<div class="a" style="left:942.8px;top:82.3px;width:1.5px;height:17.7px;background:#62686f"></div>
<div class="a" style="left:959.8px;top:82.3px;width:1.5px;height:17.7px;background:#62686f"></div>
<div class="a" style="left:976.8px;top:82.3px;width:1.5px;height:17.7px;background:#62686f"></div>
<div class="a" style="left:993.8px;top:82.3px;width:1.5px;height:17.7px;background:#62686f"></div>
<div class="a" style="left:1010.8px;top:82.3px;width:1.5px;height:17.7px;background:#62686f"></div>
<svg class="a" style="left:266.6px;top:87px" width="67" height="13" viewBox="0 0 67 13">
<path d="M0 0 H10 L20.5 11 H44.5 L55 0 H67 V13 H0 Z" fill="#f3f4f2"/>
</svg>
<div class="a txt" style="left:270.5px;top:88.2px;font-size:9.5px;font-weight:bold;color:#111">L</div>
<div class="a txt" style="left:322.3px;top:88.2px;font-size:9.5px;font-weight:bold;color:#111">R</div>
<div class="clip" style="left:265.80px;top:99.90px;width:67.92px;height:37.3px;background:linear-gradient(#4fae4a,#3d8e3b);box-shadow:inset 1px 0 0 rgba(255,255,255,0.28),inset -1px 0 0 rgba(255,255,255,0.12),inset 0 1px 0 rgba(255,255,255,0.13)"><svg class="a" style="left:0;top:0" width="68" height="37"><path d="M3.00 18.60H65.92" stroke="#237023" stroke-width="2.80" stroke-dasharray="1.30 0.84" stroke-dashoffset="0.00"/></svg><div class="ct">Sidechain</div></div>
<div class="clip" style="left:402.44px;top:99.90px;width:68.72px;height:37.3px;background:linear-gradient(#4fae4a,#3d8e3b);box-shadow:inset 1px 0 0 rgba(255,255,255,0.28),inset -1px 0 0 rgba(255,255,255,0.12),inset 0 1px 0 rgba(255,255,255,0.13)"><svg class="a" style="left:0;top:0" width="69" height="37"><path d="M3.00 18.60H66.72" stroke="#237023" stroke-width="2.80" stroke-dasharray="1.30 0.84" stroke-dashoffset="0.00"/></svg><div class="ct">Sidechain</div></div>
<div class="clip" style="left:471.16px;top:99.90px;width:68.72px;height:37.3px;background:linear-gradient(#4fae4a,#3d8e3b);box-shadow:inset 1px 0 0 rgba(255,255,255,0.28),inset -1px 0 0 rgba(255,255,255,0.12),inset 0 1px 0 rgba(255,255,255,0.13)"><svg class="a" style="left:0;top:0" width="69" height="37"><path d="M3.00 18.60H66.72" stroke="#237023" stroke-width="2.80" stroke-dasharray="1.30 0.84" stroke-dashoffset="0.00"/></svg><div class="ct">Sidechain</div></div>
<div class="clip" style="left:539.88px;top:99.90px;width:68.72px;height:37.3px;background:linear-gradient(#4fae4a,#3d8e3b);box-shadow:inset 1px 0 0 rgba(255,255,255,0.28),inset -1px 0 0 rgba(255,255,255,0.12),inset 0 1px 0 rgba(255,255,255,0.13)"><svg class="a" style="left:0;top:0" width="69" height="37"><path d="M3.00 18.60H66.72" stroke="#237023" stroke-width="2.80" stroke-dasharray="1.30 0.84" stroke-dashoffset="0.00"/></svg><div class="ct">Sidechain</div></div>
<div class="clip" style="left:608.60px;top:99.90px;width:68.72px;height:37.3px;background:linear-gradient(#4fae4a,#3d8e3b);box-shadow:inset 1px 0 0 rgba(255,255,255,0.28),inset -1px 0 0 rgba(255,255,255,0.12),inset 0 1px 0 rgba(255,255,255,0.13)"><svg class="a" style="left:0;top:0" width="69" height="37"><path d="M3.00 18.60H66.72" stroke="#237023" stroke-width="2.80" stroke-dasharray="1.30 0.84" stroke-dashoffset="0.00"/></svg><div class="ct">Sidechain</div></div>
<div class="clip" style="left:677.32px;top:99.90px;width:68.72px;height:37.3px;background:linear-gradient(#4fae4a,#3d8e3b);box-shadow:inset 1px 0 0 rgba(255,255,255,0.28),inset -1px 0 0 rgba(255,255,255,0.12),inset 0 1px 0 rgba(255,255,255,0.13)"><svg class="a" style="left:0;top:0" width="69" height="37"><path d="M3.00 18.60H66.72" stroke="#237023" stroke-width="2.80" stroke-dasharray="1.30 0.84" stroke-dashoffset="0.00"/></svg><div class="ct">Sidechain</div></div>
<div class="clip" style="left:746.04px;top:99.90px;width:68.72px;height:37.3px;background:linear-gradient(#4fae4a,#3d8e3b);box-shadow:inset 1px 0 0 rgba(255,255,255,0.28),inset -1px 0 0 rgba(255,255,255,0.12),inset 0 1px 0 rgba(255,255,255,0.13)"><svg class="a" style="left:0;top:0" width="69" height="37"><path d="M3.00 18.60H66.72" stroke="#237023" stroke-width="2.80" stroke-dasharray="1.30 0.84" stroke-dashoffset="0.00"/></svg><div class="ct">Sidechain</div></div>
<div class="clip" style="left:814.76px;top:99.90px;width:68.72px;height:37.3px;background:linear-gradient(#4fae4a,#3d8e3b);box-shadow:inset 1px 0 0 rgba(255,255,255,0.28),inset -1px 0 0 rgba(255,255,255,0.12),inset 0 1px 0 rgba(255,255,255,0.13)"><svg class="a" style="left:0;top:0" width="69" height="37"><path d="M3.00 18.60H66.72" stroke="#237023" stroke-width="2.80" stroke-dasharray="1.30 0.84" stroke-dashoffset="0.00"/></svg><div class="ct">Sidechain</div></div>
<div class="clip" style="left:883.48px;top:99.90px;width:68.72px;height:37.3px;background:linear-gradient(#4fae4a,#3d8e3b);box-shadow:inset 1px 0 0 rgba(255,255,255,0.28),inset -1px 0 0 rgba(255,255,255,0.12),inset 0 1px 0 rgba(255,255,255,0.13)"><svg class="a" style="left:0;top:0" width="69" height="37"><path d="M3.00 18.60H66.72" stroke="#237023" stroke-width="2.80" stroke-dasharray="1.30 0.84" stroke-dashoffset="0.00"/></svg><div class="ct">Sidechain</div></div>
<div class="clip" style="left:952.20px;top:99.90px;width:68.72px;height:37.3px;background:linear-gradient(#4fae4a,#3d8e3b);box-shadow:inset 1px 0 0 rgba(255,255,255,0.28),inset -1px 0 0 rgba(255,255,255,0.12),inset 0 1px 0 rgba(255,255,255,0.13)"><svg class="a" style="left:0;top:0" width="69" height="37"><path d="M3.00 18.60H66.72" stroke="#237023" stroke-width="2.80" stroke-dasharray="1.30 0.84" stroke-dashoffset="0.00"/></svg><div class="ct">Sidechain</div></div>
<div class="clip" style="left:265.80px;top:140.04px;width:67.92px;height:37.3px;background:linear-gradient(#be4345,#9c3136);box-shadow:inset 1px 0 0 rgba(255,255,255,0.28),inset -1px 0 0 rgba(255,255,255,0.12),inset 0 1px 0 rgba(255,255,255,0.13)"><div class="ct">Session</div></div>
<div class="clip" style="left:402.44px;top:140.04px;width:68.72px;height:37.3px;background:linear-gradient(#be4345,#9c3136);box-shadow:inset 1px 0 0 rgba(255,255,255,0.28),inset -1px 0 0 rgba(255,255,255,0.12),inset 0 1px 0 rgba(255,255,255,0.13)"><div class="ct">Intro</div></div>
<div class="clip" style="left:471.16px;top:140.04px;width:137.44px;height:37.3px;background:linear-gradient(#be4345,#9c3136);box-shadow:inset 1px 0 0 rgba(255,255,255,0.28),inset -1px 0 0 rgba(255,255,255,0.12),inset 0 1px 0 rgba(255,255,255,0.13)"><div class="ct">PreChorus</div></div>
<div class="clip" style="left:608.60px;top:140.04px;width:68.72px;height:37.3px;background:linear-gradient(#be4345,#9c3136);box-shadow:inset 1px 0 0 rgba(255,255,255,0.28),inset -1px 0 0 rgba(255,255,255,0.12),inset 0 1px 0 rgba(255,255,255,0.13)"><div class="ct">Break</div></div>
<div class="clip" style="left:677.32px;top:140.04px;width:137.44px;height:37.3px;background:linear-gradient(#be4345,#9c3136);box-shadow:inset 1px 0 0 rgba(255,255,255,0.28),inset -1px 0 0 rgba(255,255,255,0.12),inset 0 1px 0 rgba(255,255,255,0.13)"><div class="ct">Chorus</div></div>
<div class="clip" style="left:814.76px;top:140.04px;width:68.72px;height:37.3px;background:linear-gradient(#be4345,#9c3136);box-shadow:inset 1px 0 0 rgba(255,255,255,0.28),inset -1px 0 0 rgba(255,255,255,0.12),inset 0 1px 0 rgba(255,255,255,0.13)"><div class="ct">Break</div></div>
<div class="clip" style="left:883.48px;top:140.04px;width:137.44px;height:37.3px;background:linear-gradient(#be4345,#9c3136);box-shadow:inset 1px 0 0 rgba(255,255,255,0.28),inset -1px 0 0 rgba(255,255,255,0.12),inset 0 1px 0 rgba(255,255,255,0.13)"><div class="ct">Outro</div></div>
<div class="clip" style="left:265.80px;top:220.32px;width:67.92px;height:37.3px;background:linear-gradient(#3aabaf,#2c8c90);box-shadow:inset 1px 0 0 rgba(255,255,255,0.28),inset -1px 0 0 rgba(255,255,255,0.12),inset 0 1px 0 rgba(255,255,255,0.13)"><div class="a" style="left:1.0px;top:17.3px;width:66.9px;height:2.4px;background:#0e6a6d"></div><div class="ct">Kick</div></div>
<div class="clip" style="left:471.16px;top:220.32px;width:68.72px;height:37.3px;background:linear-gradient(#3aabaf,#2c8c90);box-shadow:inset 1px 0 0 rgba(255,255,255,0.28),inset -1px 0 0 rgba(255,255,255,0.12),inset 0 1px 0 rgba(255,255,255,0.13)"><div class="a" style="left:1.0px;top:17.3px;width:67.7px;height:2.4px;background:#0e6a6d"></div><div class="ct">Kick</div></div>
<div class="clip" style="left:539.88px;top:220.32px;width:68.72px;height:37.3px;background:linear-gradient(#3aabaf,#2c8c90);box-shadow:inset 1px 0 0 rgba(255,255,255,0.28),inset -1px 0 0 rgba(255,255,255,0.12),inset 0 1px 0 rgba(255,255,255,0.13)"><div class="a" style="left:1.0px;top:17.3px;width:67.7px;height:2.4px;background:#0e6a6d"></div><div class="ct">Kick</div></div>
<div class="clip" style="left:677.32px;top:220.32px;width:68.72px;height:37.3px;background:linear-gradient(#3aabaf,#2c8c90);box-shadow:inset 1px 0 0 rgba(255,255,255,0.28),inset -1px 0 0 rgba(255,255,255,0.12),inset 0 1px 0 rgba(255,255,255,0.13)"><div class="a" style="left:1.0px;top:17.3px;width:67.7px;height:2.4px;background:#0e6a6d"></div><div class="ct">Kick</div></div>
<div class="clip" style="left:746.04px;top:220.32px;width:68.72px;height:37.3px;background:linear-gradient(#3aabaf,#2c8c90);box-shadow:inset 1px 0 0 rgba(255,255,255,0.28),inset -1px 0 0 rgba(255,255,255,0.12),inset 0 1px 0 rgba(255,255,255,0.13)"><div class="a" style="left:1.0px;top:17.3px;width:67.7px;height:2.4px;background:#0e6a6d"></div><div class="ct">Kick</div></div>
<div class="clip" style="left:883.48px;top:220.32px;width:68.72px;height:37.3px;background:linear-gradient(#3aabaf,#2c8c90);box-shadow:inset 1px 0 0 rgba(255,255,255,0.28),inset -1px 0 0 rgba(255,255,255,0.12),inset 0 1px 0 rgba(255,255,255,0.13)"><div class="a" style="left:1.0px;top:17.3px;width:67.7px;height:2.4px;background:#0e6a6d"></div><div class="ct">Kick</div></div>
<div class="clip" style="left:952.20px;top:220.32px;width:34.36px;height:37.3px;background:linear-gradient(#3aabaf,#2c8c90);box-shadow:inset 1px 0 0 rgba(255,255,255,0.28),inset -1px 0 0 rgba(255,255,255,0.12),inset 0 1px 0 rgba(255,255,255,0.13)"><div class="a" style="left:1.0px;top:17.3px;width:33.4px;height:2.4px;background:#0e6a6d"></div></div>
<div class="clip" style="left:265.80px;top:260.46px;width:67.92px;height:37.3px;background:linear-gradient(#3aabaf,#2c8c90);box-shadow:inset 1px 0 0 rgba(255,255,255,0.28),inset -1px 0 0 rgba(255,255,255,0.12),inset 0 1px 0 rgba(255,255,255,0.13)"><svg class="a" style="left:0;top:0" width="68" height="37"><path d="M3.00 19.50H66.92" stroke="#1b7276" stroke-width="3.00" stroke-dasharray="1.40 2.89" stroke-dashoffset="0.00"/></svg><div class="ct">Snare</div></div>
<div class="clip" style="left:677.32px;top:260.46px;width:68.72px;height:37.3px;background:linear-gradient(#3aabaf,#2c8c90);box-shadow:inset 1px 0 0 rgba(255,255,255,0.28),inset -1px 0 0 rgba(255,255,255,0.12),inset 0 1px 0 rgba(255,255,255,0.13)"><svg class="a" style="left:0;top:0" width="69" height="37"><path d="M3.00 19.50H67.72" stroke="#1b7276" stroke-width="3.00" stroke-dasharray="1.40 2.89" stroke-dashoffset="0.00"/></svg><div class="ct">Snare</div></div>
<div class="clip" style="left:746.04px;top:260.46px;width:68.72px;height:37.3px;background:linear-gradient(#3aabaf,#2c8c90);box-shadow:inset 1px 0 0 rgba(255,255,255,0.28),inset -1px 0 0 rgba(255,255,255,0.12),inset 0 1px 0 rgba(255,255,255,0.13)"><svg class="a" style="left:0;top:0" width="69" height="37"><path d="M3.00 19.50H67.72" stroke="#1b7276" stroke-width="3.00" stroke-dasharray="1.40 2.89" stroke-dashoffset="0.00"/></svg><div class="ct">Snare</div></div>
<div class="clip" style="left:814.76px;top:260.46px;width:68.72px;height:37.3px;background:linear-gradient(#3aabaf,#2c8c90);box-shadow:inset 1px 0 0 rgba(255,255,255,0.28),inset -1px 0 0 rgba(255,255,255,0.12),inset 0 1px 0 rgba(255,255,255,0.13)"><svg class="a" style="left:0;top:0" width="69" height="37"><path d="M3.00 19.50H67.72" stroke="#1b7276" stroke-width="3.00" stroke-dasharray="1.40 2.89" stroke-dashoffset="0.00"/></svg><div class="ct">Snare</div></div>
<div class="clip" style="left:883.48px;top:260.46px;width:68.72px;height:37.3px;background:linear-gradient(#3aabaf,#2c8c90);box-shadow:inset 1px 0 0 rgba(255,255,255,0.28),inset -1px 0 0 rgba(255,255,255,0.12),inset 0 1px 0 rgba(255,255,255,0.13)"><svg class="a" style="left:0;top:0" width="69" height="37"><path d="M3.00 19.50H67.72" stroke="#1b7276" stroke-width="3.00" stroke-dasharray="1.40 2.89" stroke-dashoffset="0.00"/></svg><div class="ct">Snare</div></div>
<div class="clip" style="left:952.20px;top:260.46px;width:68.72px;height:37.3px;background:linear-gradient(#3aabaf,#2c8c90);box-shadow:inset 1px 0 0 rgba(255,255,255,0.28),inset -1px 0 0 rgba(255,255,255,0.12),inset 0 1px 0 rgba(255,255,255,0.13)"><svg class="a" style="left:0;top:0" width="69" height="37"><path d="M3.00 19.50H67.72" stroke="#1b7276" stroke-width="3.00" stroke-dasharray="1.40 2.89" stroke-dashoffset="0.00"/></svg><div class="ct">Snare</div></div>
<div class="clip" style="left:265.80px;top:300.60px;width:67.92px;height:37.3px;background:linear-gradient(#3aabaf,#2c8c90);box-shadow:inset 1px 0 0 rgba(255,255,255,0.28),inset -1px 0 0 rgba(255,255,255,0.12),inset 0 1px 0 rgba(255,255,255,0.13)"><div class="a" style="left:1.0px;top:17.3px;width:66.9px;height:2.4px;background:#0e6a6d"></div><div class="ct">Closedhat</div></div>
<div class="clip" style="left:677.32px;top:300.60px;width:68.72px;height:37.3px;background:linear-gradient(#3aabaf,#2c8c90);box-shadow:inset 1px 0 0 rgba(255,255,255,0.28),inset -1px 0 0 rgba(255,255,255,0.12),inset 0 1px 0 rgba(255,255,255,0.13)"><div class="a" style="left:1.0px;top:17.3px;width:67.7px;height:2.4px;background:#0e6a6d"></div><div class="ct">Closedhat</div></div>
<div class="clip" style="left:746.04px;top:300.60px;width:68.72px;height:37.3px;background:linear-gradient(#3aabaf,#2c8c90);box-shadow:inset 1px 0 0 rgba(255,255,255,0.28),inset -1px 0 0 rgba(255,255,255,0.12),inset 0 1px 0 rgba(255,255,255,0.13)"><div class="a" style="left:1.0px;top:17.3px;width:67.7px;height:2.4px;background:#0e6a6d"></div><div class="ct">Closedhat</div></div>
<div class="clip" style="left:814.76px;top:300.60px;width:68.72px;height:37.3px;background:linear-gradient(#3aabaf,#2c8c90);box-shadow:inset 1px 0 0 rgba(255,255,255,0.28),inset -1px 0 0 rgba(255,255,255,0.12),inset 0 1px 0 rgba(255,255,255,0.13)"><div class="a" style="left:1.0px;top:17.3px;width:67.7px;height:2.4px;background:#0e6a6d"></div><div class="ct">Closedhat</div></div>
<div class="clip" style="left:883.48px;top:300.60px;width:68.72px;height:37.3px;background:linear-gradient(#3aabaf,#2c8c90);box-shadow:inset 1px 0 0 rgba(255,255,255,0.28),inset -1px 0 0 rgba(255,255,255,0.12),inset 0 1px 0 rgba(255,255,255,0.13)"><div class="a" style="left:1.0px;top:17.3px;width:67.7px;height:2.4px;background:#0e6a6d"></div><div class="ct">Closedhat</div></div>
<div class="clip" style="left:265.80px;top:340.74px;width:67.92px;height:37.3px;background:linear-gradient(#3aabaf,#2c8c90);box-shadow:inset 1px 0 0 rgba(255,255,255,0.28),inset -1px 0 0 rgba(255,255,255,0.12),inset 0 1px 0 rgba(255,255,255,0.13)"><svg class="a" style="left:0;top:0" width="68" height="37"><path d="M8.00 18.60H67.92" stroke="#1f787c" stroke-width="3.20" stroke-dasharray="1.30 15.86" stroke-dashoffset="0.00"/></svg><div class="ct">Noisefill</div></div>
<div class="clip" style="left:402.44px;top:340.74px;width:68.72px;height:37.3px;background:linear-gradient(#3aabaf,#2c8c90);box-shadow:inset 1px 0 0 rgba(255,255,255,0.28),inset -1px 0 0 rgba(255,255,255,0.12),inset 0 1px 0 rgba(255,255,255,0.13)"><svg class="a" style="left:0;top:0" width="69" height="37"><path d="M8.00 18.60H68.72" stroke="#1f787c" stroke-width="3.20" stroke-dasharray="1.30 15.86" stroke-dashoffset="0.00"/></svg><div class="ct">Noisefill</div></div>
<div class="clip" style="left:677.32px;top:340.74px;width:68.72px;height:37.3px;background:linear-gradient(#3aabaf,#2c8c90);box-shadow:inset 1px 0 0 rgba(255,255,255,0.28),inset -1px 0 0 rgba(255,255,255,0.12),inset 0 1px 0 rgba(255,255,255,0.13)"><svg class="a" style="left:0;top:0" width="69" height="37"><path d="M8.00 18.60H68.72" stroke="#1f787c" stroke-width="3.20" stroke-dasharray="1.30 15.86" stroke-dashoffset="0.00"/></svg><div class="ct">Noisefill</div></div>
<div class="clip" style="left:746.04px;top:340.74px;width:68.72px;height:37.3px;background:linear-gradient(#3aabaf,#2c8c90);box-shadow:inset 1px 0 0 rgba(255,255,255,0.28),inset -1px 0 0 rgba(255,255,255,0.12),inset 0 1px 0 rgba(255,255,255,0.13)"><svg class="a" style="left:0;top:0" width="69" height="37"><path d="M8.00 18.60H68.72" stroke="#1f787c" stroke-width="3.20" stroke-dasharray="1.30 15.86" stroke-dashoffset="0.00"/></svg><div class="ct">Noisefill</div></div>
<div class="clip" style="left:814.76px;top:340.74px;width:68.72px;height:37.3px;background:linear-gradient(#3aabaf,#2c8c90);box-shadow:inset 1px 0 0 rgba(255,255,255,0.28),inset -1px 0 0 rgba(255,255,255,0.12),inset 0 1px 0 rgba(255,255,255,0.13)"><svg class="a" style="left:0;top:0" width="69" height="37"><path d="M8.00 18.60H68.72" stroke="#1f787c" stroke-width="3.20" stroke-dasharray="1.30 15.86" stroke-dashoffset="0.00"/></svg><div class="ct">Noisefill</div></div>
<div class="clip" style="left:952.20px;top:340.74px;width:68.72px;height:37.3px;background:linear-gradient(#3aabaf,#2c8c90);box-shadow:inset 1px 0 0 rgba(255,255,255,0.28),inset -1px 0 0 rgba(255,255,255,0.12),inset 0 1px 0 rgba(255,255,255,0.13)"><svg class="a" style="left:0;top:0" width="69" height="37"><path d="M8.00 18.60H68.72" stroke="#1f787c" stroke-width="3.20" stroke-dasharray="1.30 15.86" stroke-dashoffset="0.00"/></svg><div class="ct">Noisefill</div></div>
<div class="clip" style="left:265.80px;top:380.88px;width:67.92px;height:37.3px;background:linear-gradient(#3aabaf,#2c8c90);box-shadow:inset 1px 0 0 rgba(255,255,255,0.28),inset -1px 0 0 rgba(255,255,255,0.12),inset 0 1px 0 rgba(255,255,255,0.13)"><svg class="a" style="left:0;top:0" width="68" height="37"><path d="M1.00 18.60H67.92" stroke="#106b6e" stroke-width="3.00" stroke-dasharray="3.50 0.79" stroke-dashoffset="0.00"/></svg><div class="ct">Shaker</div></div>
<div class="clip" style="left:539.88px;top:380.88px;width:68.72px;height:37.3px;background:linear-gradient(#3aabaf,#2c8c90);box-shadow:inset 1px 0 0 rgba(255,255,255,0.28),inset -1px 0 0 rgba(255,255,255,0.12),inset 0 1px 0 rgba(255,255,255,0.13)"><svg class="a" style="left:0;top:0" width="69" height="37"><path d="M1.00 18.60H68.72" stroke="#106b6e" stroke-width="3.00" stroke-dasharray="3.50 0.79" stroke-dashoffset="0.00"/></svg><div class="ct">Shaker</div></div>
<div class="clip" style="left:608.60px;top:380.88px;width:68.72px;height:37.3px;background:linear-gradient(#3aabaf,#2c8c90);box-shadow:inset 1px 0 0 rgba(255,255,255,0.28),inset -1px 0 0 rgba(255,255,255,0.12),inset 0 1px 0 rgba(255,255,255,0.13)"><svg class="a" style="left:0;top:0" width="69" height="37"><path d="M1.00 18.60H68.72" stroke="#106b6e" stroke-width="3.00" stroke-dasharray="3.50 0.79" stroke-dashoffset="0.00"/></svg><div class="ct">Shaker</div></div>
<div class="clip" style="left:677.32px;top:380.88px;width:68.72px;height:37.3px;background:linear-gradient(#3aabaf,#2c8c90);box-shadow:inset 1px 0 0 rgba(255,255,255,0.28),inset -1px 0 0 rgba(255,255,255,0.12),inset 0 1px 0 rgba(255,255,255,0.13)"><svg class="a" style="left:0;top:0" width="69" height="37"><path d="M1.00 18.60H68.72" stroke="#106b6e" stroke-width="3.00" stroke-dasharray="3.50 0.79" stroke-dashoffset="0.00"/></svg><div class="ct">Shaker</div></div>
<div class="clip" style="left:746.04px;top:380.88px;width:68.72px;height:37.3px;background:linear-gradient(#3aabaf,#2c8c90);box-shadow:inset 1px 0 0 rgba(255,255,255,0.28),inset -1px 0 0 rgba(255,255,255,0.12),inset 0 1px 0 rgba(255,255,255,0.13)"><svg class="a" style="left:0;top:0" width="69" height="37"><path d="M1.00 18.60H68.72" stroke="#106b6e" stroke-width="3.00" stroke-dasharray="3.50 0.79" stroke-dashoffset="0.00"/></svg><div class="ct">Shaker</div></div>
<div class="clip" style="left:814.76px;top:380.88px;width:68.72px;height:37.3px;background:linear-gradient(#3aabaf,#2c8c90);box-shadow:inset 1px 0 0 rgba(255,255,255,0.28),inset -1px 0 0 rgba(255,255,255,0.12),inset 0 1px 0 rgba(255,255,255,0.13)"><svg class="a" style="left:0;top:0" width="69" height="37"><path d="M1.00 18.60H68.72" stroke="#106b6e" stroke-width="3.00" stroke-dasharray="3.50 0.79" stroke-dashoffset="0.00"/></svg><div class="ct">Shaker</div></div>
<div class="clip" style="left:883.48px;top:380.88px;width:68.72px;height:37.3px;background:linear-gradient(#3aabaf,#2c8c90);box-shadow:inset 1px 0 0 rgba(255,255,255,0.28),inset -1px 0 0 rgba(255,255,255,0.12),inset 0 1px 0 rgba(255,255,255,0.13)"><svg class="a" style="left:0;top:0" width="69" height="37"><path d="M1.00 18.60H68.72" stroke="#106b6e" stroke-width="3.00" stroke-dasharray="3.50 0.79" stroke-dashoffset="0.00"/></svg><div class="ct">Shaker</div></div>
<div class="clip" style="left:265.80px;top:421.02px;width:67.92px;height:37.3px;background:linear-gradient(#3aabaf,#2c8c90);box-shadow:inset 1px 0 0 rgba(255,255,255,0.28),inset -1px 0 0 rgba(255,255,255,0.12),inset 0 1px 0 rgba(255,255,255,0.13)"><div class="a" style="left:7.9px;top:10.7px;width:1.3px;height:3.0px;background:#1f787c"></div><div class="a" style="left:16.8px;top:10.7px;width:1.3px;height:3.0px;background:#1f787c"></div><div class="a" style="left:25.5px;top:10.7px;width:1.3px;height:3.0px;background:#1f787c"></div><div class="a" style="left:34.0px;top:10.7px;width:1.3px;height:3.0px;background:#1f787c"></div><div class="a" style="left:42.2px;top:10.7px;width:1.3px;height:3.0px;background:#1f787c"></div><div class="a" style="left:50.8px;top:10.7px;width:1.3px;height:3.0px;background:#1f787c"></div><div class="a" style="left:59.5px;top:10.7px;width:1.3px;height:3.0px;background:#1f787c"></div><div class="a" style="left:8.7px;top:17.0px;width:1.3px;height:3.0px;background:#1f787c"></div><div class="a" style="left:15.9px;top:17.0px;width:1.3px;height:3.0px;background:#1f787c"></div><div class="a" style="left:25.7px;top:17.0px;width:1.3px;height:3.0px;background:#1f787c"></div><div class="a" style="left:34.8px;top:17.0px;width:1.3px;height:3.0px;background:#1f787c"></div><div class="a" style="left:42.9px;top:17.0px;width:1.3px;height:3.0px;background:#1f787c"></div><div class="a" style="left:50.6px;top:17.0px;width:1.3px;height:3.0px;background:#1f787c"></div><div class="a" style="left:60.2px;top:17.0px;width:1.3px;height:3.0px;background:#1f787c"></div><div class="a" style="left:15.7px;top:23.2px;width:1.3px;height:3.0px;background:#1f787c"></div><div class="a" style="left:26.4px;top:23.2px;width:1.3px;height:3.0px;background:#1f787c"></div><div class="a" style="left:34.1px;top:23.2px;width:1.3px;height:3.0px;background:#1f787c"></div><div class="a" style="left:49.4px;top:23.2px;width:1.3px;height:3.0px;background:#1f787c"></div><div class="a" style="left:60.4px;top:23.2px;width:1.3px;height:3.0px;background:#1f787c"></div><div class="ct">Toms</div></div>
<div class="clip" style="left:402.44px;top:421.02px;width:68.72px;height:37.3px;background:linear-gradient(#3aabaf,#2c8c90);box-shadow:inset 1px 0 0 rgba(255,255,255,0.28),inset -1px 0 0 rgba(255,255,255,0.12),inset 0 1px 0 rgba(255,255,255,0.13)"><div class="a" style="left:7.9px;top:10.7px;width:1.3px;height:3.0px;background:#1f787c"></div><div class="a" style="left:16.8px;top:10.7px;width:1.3px;height:3.0px;background:#1f787c"></div><div class="a" style="left:25.5px;top:10.7px;width:1.3px;height:3.0px;background:#1f787c"></div><div class="a" style="left:34.0px;top:10.7px;width:1.3px;height:3.0px;background:#1f787c"></div><div class="a" style="left:42.2px;top:10.7px;width:1.3px;height:3.0px;background:#1f787c"></div><div class="a" style="left:50.8px;top:10.7px;width:1.3px;height:3.0px;background:#1f787c"></div><div class="a" style="left:59.5px;top:10.7px;width:1.3px;height:3.0px;background:#1f787c"></div><div class="a" style="left:8.7px;top:17.0px;width:1.3px;height:3.0px;background:#1f787c"></div><div class="a" style="left:15.9px;top:17.0px;width:1.3px;height:3.0px;background:#1f787c"></div><div class="a" style="left:25.7px;top:17.0px;width:1.3px;height:3.0px;background:#1f787c"></div><div class="a" style="left:34.8px;top:17.0px;width:1.3px;height:3.0px;background:#1f787c"></div><div class="a" style="left:42.9px;top:17.0px;width:1.3px;height:3.0px;background:#1f787c"></div><div class="a" style="left:50.6px;top:17.0px;width:1.3px;height:3.0px;background:#1f787c"></div><div class="a" style="left:60.2px;top:17.0px;width:1.3px;height:3.0px;background:#1f787c"></div><div class="a" style="left:15.7px;top:23.2px;width:1.3px;height:3.0px;background:#1f787c"></div><div class="a" style="left:26.4px;top:23.2px;width:1.3px;height:3.0px;background:#1f787c"></div><div class="a" style="left:34.1px;top:23.2px;width:1.3px;height:3.0px;background:#1f787c"></div><div class="a" style="left:49.4px;top:23.2px;width:1.3px;height:3.0px;background:#1f787c"></div><div class="a" style="left:60.4px;top:23.2px;width:1.3px;height:3.0px;background:#1f787c"></div><div class="ct">Toms</div></div>
<div class="clip" style="left:471.16px;top:421.02px;width:68.72px;height:37.3px;background:linear-gradient(#3aabaf,#2c8c90);box-shadow:inset 1px 0 0 rgba(255,255,255,0.28),inset -1px 0 0 rgba(255,255,255,0.12),inset 0 1px 0 rgba(255,255,255,0.13)"><div class="a" style="left:7.9px;top:10.7px;width:1.3px;height:3.0px;background:#1f787c"></div><div class="a" style="left:16.8px;top:10.7px;width:1.3px;height:3.0px;background:#1f787c"></div><div class="a" style="left:25.5px;top:10.7px;width:1.3px;height:3.0px;background:#1f787c"></div><div class="a" style="left:34.0px;top:10.7px;width:1.3px;height:3.0px;background:#1f787c"></div><div class="a" style="left:42.2px;top:10.7px;width:1.3px;height:3.0px;background:#1f787c"></div><div class="a" style="left:50.8px;top:10.7px;width:1.3px;height:3.0px;background:#1f787c"></div><div class="a" style="left:59.5px;top:10.7px;width:1.3px;height:3.0px;background:#1f787c"></div><div class="a" style="left:8.7px;top:17.0px;width:1.3px;height:3.0px;background:#1f787c"></div><div class="a" style="left:15.9px;top:17.0px;width:1.3px;height:3.0px;background:#1f787c"></div><div class="a" style="left:25.7px;top:17.0px;width:1.3px;height:3.0px;background:#1f787c"></div><div class="a" style="left:34.8px;top:17.0px;width:1.3px;height:3.0px;background:#1f787c"></div><div class="a" style="left:42.9px;top:17.0px;width:1.3px;height:3.0px;background:#1f787c"></div><div class="a" style="left:50.6px;top:17.0px;width:1.3px;height:3.0px;background:#1f787c"></div><div class="a" style="left:60.2px;top:17.0px;width:1.3px;height:3.0px;background:#1f787c"></div><div class="a" style="left:15.7px;top:23.2px;width:1.3px;height:3.0px;background:#1f787c"></div><div class="a" style="left:26.4px;top:23.2px;width:1.3px;height:3.0px;background:#1f787c"></div><div class="a" style="left:34.1px;top:23.2px;width:1.3px;height:3.0px;background:#1f787c"></div><div class="a" style="left:49.4px;top:23.2px;width:1.3px;height:3.0px;background:#1f787c"></div><div class="a" style="left:60.4px;top:23.2px;width:1.3px;height:3.0px;background:#1f787c"></div><div class="ct">Toms</div></div>
<div class="clip" style="left:539.88px;top:421.02px;width:68.72px;height:37.3px;background:linear-gradient(#3aabaf,#2c8c90);box-shadow:inset 1px 0 0 rgba(255,255,255,0.28),inset -1px 0 0 rgba(255,255,255,0.12),inset 0 1px 0 rgba(255,255,255,0.13)"><div class="a" style="left:7.9px;top:10.7px;width:1.3px;height:3.0px;background:#1f787c"></div><div class="a" style="left:16.8px;top:10.7px;width:1.3px;height:3.0px;background:#1f787c"></div><div class="a" style="left:25.5px;top:10.7px;width:1.3px;height:3.0px;background:#1f787c"></div><div class="a" style="left:34.0px;top:10.7px;width:1.3px;height:3.0px;background:#1f787c"></div><div class="a" style="left:42.2px;top:10.7px;width:1.3px;height:3.0px;background:#1f787c"></div><div class="a" style="left:50.8px;top:10.7px;width:1.3px;height:3.0px;background:#1f787c"></div><div class="a" style="left:59.5px;top:10.7px;width:1.3px;height:3.0px;background:#1f787c"></div><div class="a" style="left:8.7px;top:17.0px;width:1.3px;height:3.0px;background:#1f787c"></div><div class="a" style="left:15.9px;top:17.0px;width:1.3px;height:3.0px;background:#1f787c"></div><div class="a" style="left:25.7px;top:17.0px;width:1.3px;height:3.0px;background:#1f787c"></div><div class="a" style="left:34.8px;top:17.0px;width:1.3px;height:3.0px;background:#1f787c"></div><div class="a" style="left:42.9px;top:17.0px;width:1.3px;height:3.0px;background:#1f787c"></div><div class="a" style="left:50.6px;top:17.0px;width:1.3px;height:3.0px;background:#1f787c"></div><div class="a" style="left:60.2px;top:17.0px;width:1.3px;height:3.0px;background:#1f787c"></div><div class="a" style="left:15.7px;top:23.2px;width:1.3px;height:3.0px;background:#1f787c"></div><div class="a" style="left:26.4px;top:23.2px;width:1.3px;height:3.0px;background:#1f787c"></div><div class="a" style="left:34.1px;top:23.2px;width:1.3px;height:3.0px;background:#1f787c"></div><div class="a" style="left:49.4px;top:23.2px;width:1.3px;height:3.0px;background:#1f787c"></div><div class="a" style="left:60.4px;top:23.2px;width:1.3px;height:3.0px;background:#1f787c"></div><div class="ct">Toms</div></div>
<div class="clip" style="left:608.60px;top:421.02px;width:68.72px;height:37.3px;background:linear-gradient(#3aabaf,#2c8c90);box-shadow:inset 1px 0 0 rgba(255,255,255,0.28),inset -1px 0 0 rgba(255,255,255,0.12),inset 0 1px 0 rgba(255,255,255,0.13)"><div class="a" style="left:7.9px;top:10.7px;width:1.3px;height:3.0px;background:#1f787c"></div><div class="a" style="left:16.8px;top:10.7px;width:1.3px;height:3.0px;background:#1f787c"></div><div class="a" style="left:25.5px;top:10.7px;width:1.3px;height:3.0px;background:#1f787c"></div><div class="a" style="left:34.0px;top:10.7px;width:1.3px;height:3.0px;background:#1f787c"></div><div class="a" style="left:42.2px;top:10.7px;width:1.3px;height:3.0px;background:#1f787c"></div><div class="a" style="left:50.8px;top:10.7px;width:1.3px;height:3.0px;background:#1f787c"></div><div class="a" style="left:59.5px;top:10.7px;width:1.3px;height:3.0px;background:#1f787c"></div><div class="a" style="left:8.7px;top:17.0px;width:1.3px;height:3.0px;background:#1f787c"></div><div class="a" style="left:15.9px;top:17.0px;width:1.3px;height:3.0px;background:#1f787c"></div><div class="a" style="left:25.7px;top:17.0px;width:1.3px;height:3.0px;background:#1f787c"></div><div class="a" style="left:34.8px;top:17.0px;width:1.3px;height:3.0px;background:#1f787c"></div><div class="a" style="left:42.9px;top:17.0px;width:1.3px;height:3.0px;background:#1f787c"></div><div class="a" style="left:50.6px;top:17.0px;width:1.3px;height:3.0px;background:#1f787c"></div><div class="a" style="left:60.2px;top:17.0px;width:1.3px;height:3.0px;background:#1f787c"></div><div class="a" style="left:15.7px;top:23.2px;width:1.3px;height:3.0px;background:#1f787c"></div><div class="a" style="left:26.4px;top:23.2px;width:1.3px;height:3.0px;background:#1f787c"></div><div class="a" style="left:34.1px;top:23.2px;width:1.3px;height:3.0px;background:#1f787c"></div><div class="a" style="left:49.4px;top:23.2px;width:1.3px;height:3.0px;background:#1f787c"></div><div class="a" style="left:60.4px;top:23.2px;width:1.3px;height:3.0px;background:#1f787c"></div><div class="ct">Toms</div></div>
<div class="clip" style="left:677.32px;top:421.02px;width:68.72px;height:37.3px;background:linear-gradient(#3aabaf,#2c8c90);box-shadow:inset 1px 0 0 rgba(255,255,255,0.28),inset -1px 0 0 rgba(255,255,255,0.12),inset 0 1px 0 rgba(255,255,255,0.13)"><div class="a" style="left:7.9px;top:10.7px;width:1.3px;height:3.0px;background:#1f787c"></div><div class="a" style="left:16.8px;top:10.7px;width:1.3px;height:3.0px;background:#1f787c"></div><div class="a" style="left:25.5px;top:10.7px;width:1.3px;height:3.0px;background:#1f787c"></div><div class="a" style="left:34.0px;top:10.7px;width:1.3px;height:3.0px;background:#1f787c"></div><div class="a" style="left:42.2px;top:10.7px;width:1.3px;height:3.0px;background:#1f787c"></div><div class="a" style="left:50.8px;top:10.7px;width:1.3px;height:3.0px;background:#1f787c"></div><div class="a" style="left:59.5px;top:10.7px;width:1.3px;height:3.0px;background:#1f787c"></div><div class="a" style="left:8.7px;top:17.0px;width:1.3px;height:3.0px;background:#1f787c"></div><div class="a" style="left:15.9px;top:17.0px;width:1.3px;height:3.0px;background:#1f787c"></div><div class="a" style="left:25.7px;top:17.0px;width:1.3px;height:3.0px;background:#1f787c"></div><div class="a" style="left:34.8px;top:17.0px;width:1.3px;height:3.0px;background:#1f787c"></div><div class="a" style="left:42.9px;top:17.0px;width:1.3px;height:3.0px;background:#1f787c"></div><div class="a" style="left:50.6px;top:17.0px;width:1.3px;height:3.0px;background:#1f787c"></div><div class="a" style="left:60.2px;top:17.0px;width:1.3px;height:3.0px;background:#1f787c"></div><div class="a" style="left:15.7px;top:23.2px;width:1.3px;height:3.0px;background:#1f787c"></div><div class="a" style="left:26.4px;top:23.2px;width:1.3px;height:3.0px;background:#1f787c"></div><div class="a" style="left:34.1px;top:23.2px;width:1.3px;height:3.0px;background:#1f787c"></div><div class="a" style="left:49.4px;top:23.2px;width:1.3px;height:3.0px;background:#1f787c"></div><div class="a" style="left:60.4px;top:23.2px;width:1.3px;height:3.0px;background:#1f787c"></div><div class="ct">Toms</div></div>
<div class="clip" style="left:746.04px;top:421.02px;width:68.72px;height:37.3px;background:linear-gradient(#3aabaf,#2c8c90);box-shadow:inset 1px 0 0 rgba(255,255,255,0.28),inset -1px 0 0 rgba(255,255,255,0.12),inset 0 1px 0 rgba(255,255,255,0.13)"><div class="a" style="left:7.9px;top:10.7px;width:1.3px;height:3.0px;background:#1f787c"></div><div class="a" style="left:16.8px;top:10.7px;width:1.3px;height:3.0px;background:#1f787c"></div><div class="a" style="left:25.5px;top:10.7px;width:1.3px;height:3.0px;background:#1f787c"></div><div class="a" style="left:34.0px;top:10.7px;width:1.3px;height:3.0px;background:#1f787c"></div><div class="a" style="left:42.2px;top:10.7px;width:1.3px;height:3.0px;background:#1f787c"></div><div class="a" style="left:50.8px;top:10.7px;width:1.3px;height:3.0px;background:#1f787c"></div><div class="a" style="left:59.5px;top:10.7px;width:1.3px;height:3.0px;background:#1f787c"></div><div class="a" style="left:8.7px;top:17.0px;width:1.3px;height:3.0px;background:#1f787c"></div><div class="a" style="left:15.9px;top:17.0px;width:1.3px;height:3.0px;background:#1f787c"></div><div class="a" style="left:25.7px;top:17.0px;width:1.3px;height:3.0px;background:#1f787c"></div><div class="a" style="left:34.8px;top:17.0px;width:1.3px;height:3.0px;background:#1f787c"></div><div class="a" style="left:42.9px;top:17.0px;width:1.3px;height:3.0px;background:#1f787c"></div><div class="a" style="left:50.6px;top:17.0px;width:1.3px;height:3.0px;background:#1f787c"></div><div class="a" style="left:60.2px;top:17.0px;width:1.3px;height:3.0px;background:#1f787c"></div><div class="a" style="left:15.7px;top:23.2px;width:1.3px;height:3.0px;background:#1f787c"></div><div class="a" style="left:26.4px;top:23.2px;width:1.3px;height:3.0px;background:#1f787c"></div><div class="a" style="left:34.1px;top:23.2px;width:1.3px;height:3.0px;background:#1f787c"></div><div class="a" style="left:49.4px;top:23.2px;width:1.3px;height:3.0px;background:#1f787c"></div><div class="a" style="left:60.4px;top:23.2px;width:1.3px;height:3.0px;background:#1f787c"></div><div class="ct">Toms</div></div>
<div class="clip" style="left:883.48px;top:421.02px;width:68.72px;height:37.3px;background:linear-gradient(#3aabaf,#2c8c90);box-shadow:inset 1px 0 0 rgba(255,255,255,0.28),inset -1px 0 0 rgba(255,255,255,0.12),inset 0 1px 0 rgba(255,255,255,0.13)"><div class="a" style="left:7.9px;top:10.7px;width:1.3px;height:3.0px;background:#1f787c"></div><div class="a" style="left:16.8px;top:10.7px;width:1.3px;height:3.0px;background:#1f787c"></div><div class="a" style="left:25.5px;top:10.7px;width:1.3px;height:3.0px;background:#1f787c"></div><div class="a" style="left:34.0px;top:10.7px;width:1.3px;height:3.0px;background:#1f787c"></div><div class="a" style="left:42.2px;top:10.7px;width:1.3px;height:3.0px;background:#1f787c"></div><div class="a" style="left:50.8px;top:10.7px;width:1.3px;height:3.0px;background:#1f787c"></div><div class="a" style="left:59.5px;top:10.7px;width:1.3px;height:3.0px;background:#1f787c"></div><div class="a" style="left:8.7px;top:17.0px;width:1.3px;height:3.0px;background:#1f787c"></div><div class="a" style="left:15.9px;top:17.0px;width:1.3px;height:3.0px;background:#1f787c"></div><div class="a" style="left:25.7px;top:17.0px;width:1.3px;height:3.0px;background:#1f787c"></div><div class="a" style="left:34.8px;top:17.0px;width:1.3px;height:3.0px;background:#1f787c"></div><div class="a" style="left:42.9px;top:17.0px;width:1.3px;height:3.0px;background:#1f787c"></div><div class="a" style="left:50.6px;top:17.0px;width:1.3px;height:3.0px;background:#1f787c"></div><div class="a" style="left:60.2px;top:17.0px;width:1.3px;height:3.0px;background:#1f787c"></div><div class="a" style="left:15.7px;top:23.2px;width:1.3px;height:3.0px;background:#1f787c"></div><div class="a" style="left:26.4px;top:23.2px;width:1.3px;height:3.0px;background:#1f787c"></div><div class="a" style="left:34.1px;top:23.2px;width:1.3px;height:3.0px;background:#1f787c"></div><div class="a" style="left:49.4px;top:23.2px;width:1.3px;height:3.0px;background:#1f787c"></div><div class="a" style="left:60.4px;top:23.2px;width:1.3px;height:3.0px;background:#1f787c"></div><div class="ct">Toms</div></div>
<div class="clip" style="left:952.20px;top:421.02px;width:68.72px;height:37.3px;background:linear-gradient(#3aabaf,#2c8c90);box-shadow:inset 1px 0 0 rgba(255,255,255,0.28),inset -1px 0 0 rgba(255,255,255,0.12),inset 0 1px 0 rgba(255,255,255,0.13)"><div class="a" style="left:7.9px;top:10.7px;width:1.3px;height:3.0px;background:#1f787c"></div><div class="a" style="left:16.8px;top:10.7px;width:1.3px;height:3.0px;background:#1f787c"></div><div class="a" style="left:25.5px;top:10.7px;width:1.3px;height:3.0px;background:#1f787c"></div><div class="a" style="left:34.0px;top:10.7px;width:1.3px;height:3.0px;background:#1f787c"></div><div class="a" style="left:42.2px;top:10.7px;width:1.3px;height:3.0px;background:#1f787c"></div><div class="a" style="left:50.8px;top:10.7px;width:1.3px;height:3.0px;background:#1f787c"></div><div class="a" style="left:59.5px;top:10.7px;width:1.3px;height:3.0px;background:#1f787c"></div><div class="a" style="left:8.7px;top:17.0px;width:1.3px;height:3.0px;background:#1f787c"></div><div class="a" style="left:15.9px;top:17.0px;width:1.3px;height:3.0px;background:#1f787c"></div><div class="a" style="left:25.7px;top:17.0px;width:1.3px;height:3.0px;background:#1f787c"></div><div class="a" style="left:34.8px;top:17.0px;width:1.3px;height:3.0px;background:#1f787c"></div><div class="a" style="left:42.9px;top:17.0px;width:1.3px;height:3.0px;background:#1f787c"></div><div class="a" style="left:50.6px;top:17.0px;width:1.3px;height:3.0px;background:#1f787c"></div><div class="a" style="left:60.2px;top:17.0px;width:1.3px;height:3.0px;background:#1f787c"></div><div class="a" style="left:15.7px;top:23.2px;width:1.3px;height:3.0px;background:#1f787c"></div><div class="a" style="left:26.4px;top:23.2px;width:1.3px;height:3.0px;background:#1f787c"></div><div class="a" style="left:34.1px;top:23.2px;width:1.3px;height:3.0px;background:#1f787c"></div><div class="a" style="left:49.4px;top:23.2px;width:1.3px;height:3.0px;background:#1f787c"></div><div class="a" style="left:60.4px;top:23.2px;width:1.3px;height:3.0px;background:#1f787c"></div><div class="ct">Toms</div></div>
<div class="clip" style="left:265.80px;top:461.16px;width:67.92px;height:37.3px;background:linear-gradient(#3aabaf,#2c8c90);box-shadow:inset 1px 0 0 rgba(255,255,255,0.28),inset -1px 0 0 rgba(255,255,255,0.12),inset 0 1px 0 rgba(255,255,255,0.13)"><div class="a" style="left:33.0px;top:17.0px;width:2.2px;height:2.2px;background:#1c6e72"></div><div class="ct">Ridefx</div></div>
<div class="clip" style="left:677.32px;top:461.16px;width:68.72px;height:37.3px;background:linear-gradient(#3aabaf,#2c8c90);box-shadow:inset 1px 0 0 rgba(255,255,255,0.28),inset -1px 0 0 rgba(255,255,255,0.12),inset 0 1px 0 rgba(255,255,255,0.13)"><div class="a" style="left:33.0px;top:17.0px;width:2.2px;height:2.2px;background:#1c6e72"></div><div class="ct">Ridefx</div></div>
<div class="clip" style="left:746.04px;top:461.16px;width:68.72px;height:37.3px;background:linear-gradient(#3aabaf,#2c8c90);box-shadow:inset 1px 0 0 rgba(255,255,255,0.28),inset -1px 0 0 rgba(255,255,255,0.12),inset 0 1px 0 rgba(255,255,255,0.13)"><div class="a" style="left:33.0px;top:17.0px;width:2.2px;height:2.2px;background:#1c6e72"></div><div class="ct">Ridefx</div></div>
<div class="clip" style="left:265.80px;top:501.30px;width:67.92px;height:37.3px;background:linear-gradient(#c66b3d,#98562f);box-shadow:inset 1px 0 0 rgba(255,255,255,0.28),inset -1px 0 0 rgba(255,255,255,0.12),inset 0 1px 0 rgba(255,255,255,0.13)"><div class="a" style="left:34.2px;top:10.7px;width:17.0px;height:2.7px;background:#85340f"></div><div class="a" style="left:17.2px;top:17.0px;width:16.8px;height:2.7px;background:#85340f"></div><div class="a" style="left:51.5px;top:17.0px;width:16.5px;height:2.7px;background:#85340f"></div><div class="a" style="left:2.2px;top:23.5px;width:14.6px;height:2.7px;background:#85340f"></div><div class="ct">Bass</div></div>
<div class="clip" style="left:471.16px;top:501.30px;width:68.72px;height:37.3px;background:linear-gradient(#c66b3d,#98562f);box-shadow:inset 1px 0 0 rgba(255,255,255,0.28),inset -1px 0 0 rgba(255,255,255,0.12),inset 0 1px 0 rgba(255,255,255,0.13)"><div class="a" style="left:34.2px;top:10.7px;width:17.0px;height:2.7px;background:#85340f"></div><div class="a" style="left:17.2px;top:17.0px;width:16.8px;height:2.7px;background:#85340f"></div><div class="a" style="left:51.5px;top:17.0px;width:16.5px;height:2.7px;background:#85340f"></div><div class="a" style="left:2.2px;top:23.5px;width:14.6px;height:2.7px;background:#85340f"></div><div class="ct">Bass</div></div>
<div class="clip" style="left:539.88px;top:501.30px;width:68.72px;height:37.3px;background:linear-gradient(#c66b3d,#98562f);box-shadow:inset 1px 0 0 rgba(255,255,255,0.28),inset -1px 0 0 rgba(255,255,255,0.12),inset 0 1px 0 rgba(255,255,255,0.13)"><div class="a" style="left:34.2px;top:10.7px;width:17.0px;height:2.7px;background:#85340f"></div><div class="a" style="left:17.2px;top:17.0px;width:16.8px;height:2.7px;background:#85340f"></div><div class="a" style="left:51.5px;top:17.0px;width:16.5px;height:2.7px;background:#85340f"></div><div class="a" style="left:2.2px;top:23.5px;width:14.6px;height:2.7px;background:#85340f"></div><div class="ct">Bass</div></div>
<div class="clip" style="left:608.60px;top:501.30px;width:68.72px;height:37.3px;background:linear-gradient(#c66b3d,#98562f);box-shadow:inset 1px 0 0 rgba(255,255,255,0.28),inset -1px 0 0 rgba(255,255,255,0.12),inset 0 1px 0 rgba(255,255,255,0.13)"><div class="a" style="left:34.2px;top:10.7px;width:17.0px;height:2.7px;background:#85340f"></div><div class="a" style="left:17.2px;top:17.0px;width:16.8px;height:2.7px;background:#85340f"></div><div class="a" style="left:51.5px;top:17.0px;width:16.5px;height:2.7px;background:#85340f"></div><div class="a" style="left:2.2px;top:23.5px;width:14.6px;height:2.7px;background:#85340f"></div><div class="ct">Bass</div></div>
<div class="clip" style="left:677.32px;top:501.30px;width:68.72px;height:37.3px;background:linear-gradient(#c66b3d,#98562f);box-shadow:inset 1px 0 0 rgba(255,255,255,0.28),inset -1px 0 0 rgba(255,255,255,0.12),inset 0 1px 0 rgba(255,255,255,0.13)"><div class="a" style="left:34.2px;top:10.7px;width:17.0px;height:2.7px;background:#85340f"></div><div class="a" style="left:17.2px;top:17.0px;width:16.8px;height:2.7px;background:#85340f"></div><div class="a" style="left:51.5px;top:17.0px;width:16.5px;height:2.7px;background:#85340f"></div><div class="a" style="left:2.2px;top:23.5px;width:14.6px;height:2.7px;background:#85340f"></div><div class="ct">Bass</div></div>
<div class="clip" style="left:746.04px;top:501.30px;width:68.72px;height:37.3px;background:linear-gradient(#c66b3d,#98562f);box-shadow:inset 1px 0 0 rgba(255,255,255,0.28),inset -1px 0 0 rgba(255,255,255,0.12),inset 0 1px 0 rgba(255,255,255,0.13)"><div class="a" style="left:34.2px;top:10.7px;width:17.0px;height:2.7px;background:#85340f"></div><div class="a" style="left:17.2px;top:17.0px;width:16.8px;height:2.7px;background:#85340f"></div><div class="a" style="left:51.5px;top:17.0px;width:16.5px;height:2.7px;background:#85340f"></div><div class="a" style="left:2.2px;top:23.5px;width:14.6px;height:2.7px;background:#85340f"></div><div class="ct">Bass</div></div>
<div class="clip" style="left:814.76px;top:501.30px;width:68.72px;height:37.3px;background:linear-gradient(#c66b3d,#98562f);box-shadow:inset 1px 0 0 rgba(255,255,255,0.28),inset -1px 0 0 rgba(255,255,255,0.12),inset 0 1px 0 rgba(255,255,255,0.13)"><div class="a" style="left:34.2px;top:10.7px;width:17.0px;height:2.7px;background:#85340f"></div><div class="a" style="left:17.2px;top:17.0px;width:16.8px;height:2.7px;background:#85340f"></div><div class="a" style="left:51.5px;top:17.0px;width:16.5px;height:2.7px;background:#85340f"></div><div class="a" style="left:2.2px;top:23.5px;width:14.6px;height:2.7px;background:#85340f"></div><div class="ct">Bass</div></div>
<div class="clip" style="left:883.48px;top:501.30px;width:68.72px;height:37.3px;background:linear-gradient(#c66b3d,#98562f);box-shadow:inset 1px 0 0 rgba(255,255,255,0.28),inset -1px 0 0 rgba(255,255,255,0.12),inset 0 1px 0 rgba(255,255,255,0.13)"><div class="a" style="left:34.2px;top:10.7px;width:17.0px;height:2.7px;background:#85340f"></div><div class="a" style="left:17.2px;top:17.0px;width:16.8px;height:2.7px;background:#85340f"></div><div class="a" style="left:51.5px;top:17.0px;width:16.5px;height:2.7px;background:#85340f"></div><div class="a" style="left:2.2px;top:23.5px;width:14.6px;height:2.7px;background:#85340f"></div><div class="ct">Bass</div></div>
<div class="clip" style="left:952.20px;top:501.30px;width:68.72px;height:37.3px;background:linear-gradient(#c66b3d,#98562f);box-shadow:inset 1px 0 0 rgba(255,255,255,0.28),inset -1px 0 0 rgba(255,255,255,0.12),inset 0 1px 0 rgba(255,255,255,0.13)"><div class="a" style="left:34.2px;top:10.7px;width:17.0px;height:2.7px;background:#85340f"></div><div class="a" style="left:17.2px;top:17.0px;width:16.8px;height:2.7px;background:#85340f"></div><div class="a" style="left:51.5px;top:17.0px;width:16.5px;height:2.7px;background:#85340f"></div><div class="a" style="left:2.2px;top:23.5px;width:14.6px;height:2.7px;background:#85340f"></div><div class="ct">Bass</div></div>
<div class="clip" style="left:265.80px;top:541.44px;width:67.92px;height:37.3px;background:linear-gradient(#b59844,#9f8538);box-shadow:inset 1px 0 0 rgba(255,255,255,0.28),inset -1px 0 0 rgba(255,255,255,0.12),inset 0 1px 0 rgba(255,255,255,0.13)"><svg class="a" style="left:0;top:0" width="68" height="37"><path d="M4.00 6.70H66.92" stroke="#86692a" stroke-width="3.80" stroke-dasharray="1.20 3.09" stroke-dashoffset="0.00"/><path d="M2.00 16.40H66.92" stroke="#8a6d2c" stroke-width="2.00" stroke-dasharray="1.10 1.04" stroke-dashoffset="0.00"/><path d="M3.00 22.90H66.92" stroke="#86692a" stroke-width="2.40" stroke-dasharray="1.80 2.49" stroke-dashoffset="0.00"/><path d="M4.00 31.40H66.92" stroke="#86692a" stroke-width="2.20" stroke-dasharray="1.20 3.09" stroke-dashoffset="0.00"/></svg><div class="ct">Arpeggio</div></div>
<div class="clip" style="left:402.44px;top:541.44px;width:68.72px;height:37.3px;background:linear-gradient(#b59844,#9f8538);box-shadow:inset 1px 0 0 rgba(255,255,255,0.28),inset -1px 0 0 rgba(255,255,255,0.12),inset 0 1px 0 rgba(255,255,255,0.13)"><svg class="a" style="left:0;top:0" width="69" height="37"><path d="M4.00 6.70H67.72" stroke="#86692a" stroke-width="3.80" stroke-dasharray="1.20 3.09" stroke-dashoffset="0.00"/><path d="M2.00 16.40H67.72" stroke="#8a6d2c" stroke-width="2.00" stroke-dasharray="1.10 1.04" stroke-dashoffset="0.00"/><path d="M3.00 22.90H67.72" stroke="#86692a" stroke-width="2.40" stroke-dasharray="1.80 2.49" stroke-dashoffset="0.00"/><path d="M4.00 31.40H67.72" stroke="#86692a" stroke-width="2.20" stroke-dasharray="1.20 3.09" stroke-dashoffset="0.00"/></svg><div class="ct">Arpeggio</div></div>
<div class="clip" style="left:471.16px;top:541.44px;width:68.72px;height:37.3px;background:linear-gradient(#b59844,#9f8538);box-shadow:inset 1px 0 0 rgba(255,255,255,0.28),inset -1px 0 0 rgba(255,255,255,0.12),inset 0 1px 0 rgba(255,255,255,0.13)"><svg class="a" style="left:0;top:0" width="69" height="37"><path d="M4.00 6.70H67.72" stroke="#86692a" stroke-width="3.80" stroke-dasharray="1.20 3.09" stroke-dashoffset="0.00"/><path d="M2.00 16.40H67.72" stroke="#8a6d2c" stroke-width="2.00" stroke-dasharray="1.10 1.04" stroke-dashoffset="0.00"/><path d="M3.00 22.90H67.72" stroke="#86692a" stroke-width="2.40" stroke-dasharray="1.80 2.49" stroke-dashoffset="0.00"/><path d="M4.00 31.40H67.72" stroke="#86692a" stroke-width="2.20" stroke-dasharray="1.20 3.09" stroke-dashoffset="0.00"/></svg><div class="ct">Arpeggio</div></div>
<div class="clip" style="left:539.88px;top:541.44px;width:68.72px;height:37.3px;background:linear-gradient(#b59844,#9f8538);box-shadow:inset 1px 0 0 rgba(255,255,255,0.28),inset -1px 0 0 rgba(255,255,255,0.12),inset 0 1px 0 rgba(255,255,255,0.13)"><svg class="a" style="left:0;top:0" width="69" height="37"><path d="M4.00 6.70H67.72" stroke="#86692a" stroke-width="3.80" stroke-dasharray="1.20 3.09" stroke-dashoffset="0.00"/><path d="M2.00 16.40H67.72" stroke="#8a6d2c" stroke-width="2.00" stroke-dasharray="1.10 1.04" stroke-dashoffset="0.00"/><path d="M3.00 22.90H67.72" stroke="#86692a" stroke-width="2.40" stroke-dasharray="1.80 2.49" stroke-dashoffset="0.00"/><path d="M4.00 31.40H67.72" stroke="#86692a" stroke-width="2.20" stroke-dasharray="1.20 3.09" stroke-dashoffset="0.00"/></svg><div class="ct">Arpeggio</div></div>
<div class="clip" style="left:608.60px;top:541.44px;width:68.72px;height:37.3px;background:linear-gradient(#b59844,#9f8538);box-shadow:inset 1px 0 0 rgba(255,255,255,0.28),inset -1px 0 0 rgba(255,255,255,0.12),inset 0 1px 0 rgba(255,255,255,0.13)"><svg class="a" style="left:0;top:0" width="69" height="37"><path d="M4.00 6.70H67.72" stroke="#86692a" stroke-width="3.80" stroke-dasharray="1.20 3.09" stroke-dashoffset="0.00"/><path d="M2.00 16.40H67.72" stroke="#8a6d2c" stroke-width="2.00" stroke-dasharray="1.10 1.04" stroke-dashoffset="0.00"/><path d="M3.00 22.90H67.72" stroke="#86692a" stroke-width="2.40" stroke-dasharray="1.80 2.49" stroke-dashoffset="0.00"/><path d="M4.00 31.40H67.72" stroke="#86692a" stroke-width="2.20" stroke-dasharray="1.20 3.09" stroke-dashoffset="0.00"/></svg><div class="ct">Arpeggio</div></div>
<div class="clip" style="left:677.32px;top:541.44px;width:68.72px;height:37.3px;background:linear-gradient(#b59844,#9f8538);box-shadow:inset 1px 0 0 rgba(255,255,255,0.28),inset -1px 0 0 rgba(255,255,255,0.12),inset 0 1px 0 rgba(255,255,255,0.13)"><svg class="a" style="left:0;top:0" width="69" height="37"><path d="M4.00 6.70H67.72" stroke="#86692a" stroke-width="3.80" stroke-dasharray="1.20 3.09" stroke-dashoffset="0.00"/><path d="M2.00 16.40H67.72" stroke="#8a6d2c" stroke-width="2.00" stroke-dasharray="1.10 1.04" stroke-dashoffset="0.00"/><path d="M3.00 22.90H67.72" stroke="#86692a" stroke-width="2.40" stroke-dasharray="1.80 2.49" stroke-dashoffset="0.00"/><path d="M4.00 31.40H67.72" stroke="#86692a" stroke-width="2.20" stroke-dasharray="1.20 3.09" stroke-dashoffset="0.00"/></svg><div class="ct">Arpeggio</div></div>
<div class="clip" style="left:746.04px;top:541.44px;width:68.72px;height:37.3px;background:linear-gradient(#b59844,#9f8538);box-shadow:inset 1px 0 0 rgba(255,255,255,0.28),inset -1px 0 0 rgba(255,255,255,0.12),inset 0 1px 0 rgba(255,255,255,0.13)"><svg class="a" style="left:0;top:0" width="69" height="37"><path d="M4.00 6.70H67.72" stroke="#86692a" stroke-width="3.80" stroke-dasharray="1.20 3.09" stroke-dashoffset="0.00"/><path d="M2.00 16.40H67.72" stroke="#8a6d2c" stroke-width="2.00" stroke-dasharray="1.10 1.04" stroke-dashoffset="0.00"/><path d="M3.00 22.90H67.72" stroke="#86692a" stroke-width="2.40" stroke-dasharray="1.80 2.49" stroke-dashoffset="0.00"/><path d="M4.00 31.40H67.72" stroke="#86692a" stroke-width="2.20" stroke-dasharray="1.20 3.09" stroke-dashoffset="0.00"/></svg><div class="ct">Arpeggio</div></div>
<div class="clip" style="left:814.76px;top:541.44px;width:68.72px;height:37.3px;background:linear-gradient(#b59844,#9f8538);box-shadow:inset 1px 0 0 rgba(255,255,255,0.28),inset -1px 0 0 rgba(255,255,255,0.12),inset 0 1px 0 rgba(255,255,255,0.13)"><svg class="a" style="left:0;top:0" width="69" height="37"><path d="M4.00 6.70H67.72" stroke="#86692a" stroke-width="3.80" stroke-dasharray="1.20 3.09" stroke-dashoffset="0.00"/><path d="M2.00 16.40H67.72" stroke="#8a6d2c" stroke-width="2.00" stroke-dasharray="1.10 1.04" stroke-dashoffset="0.00"/><path d="M3.00 22.90H67.72" stroke="#86692a" stroke-width="2.40" stroke-dasharray="1.80 2.49" stroke-dashoffset="0.00"/><path d="M4.00 31.40H67.72" stroke="#86692a" stroke-width="2.20" stroke-dasharray="1.20 3.09" stroke-dashoffset="0.00"/></svg><div class="ct">Arpeggio</div></div>
<div class="clip" style="left:883.48px;top:541.44px;width:68.72px;height:37.3px;background:linear-gradient(#b59844,#9f8538);box-shadow:inset 1px 0 0 rgba(255,255,255,0.28),inset -1px 0 0 rgba(255,255,255,0.12),inset 0 1px 0 rgba(255,255,255,0.13)"><svg class="a" style="left:0;top:0" width="69" height="37"><path d="M4.00 6.70H67.72" stroke="#86692a" stroke-width="3.80" stroke-dasharray="1.20 3.09" stroke-dashoffset="0.00"/><path d="M2.00 16.40H67.72" stroke="#8a6d2c" stroke-width="2.00" stroke-dasharray="1.10 1.04" stroke-dashoffset="0.00"/><path d="M3.00 22.90H67.72" stroke="#86692a" stroke-width="2.40" stroke-dasharray="1.80 2.49" stroke-dashoffset="0.00"/><path d="M4.00 31.40H67.72" stroke="#86692a" stroke-width="2.20" stroke-dasharray="1.20 3.09" stroke-dashoffset="0.00"/></svg><div class="ct">Arpeggio</div></div>
<div class="clip" style="left:952.20px;top:541.44px;width:68.72px;height:37.3px;background:linear-gradient(#b59844,#9f8538);box-shadow:inset 1px 0 0 rgba(255,255,255,0.28),inset -1px 0 0 rgba(255,255,255,0.12),inset 0 1px 0 rgba(255,255,255,0.13)"><svg class="a" style="left:0;top:0" width="69" height="37"><path d="M4.00 6.70H67.72" stroke="#86692a" stroke-width="3.80" stroke-dasharray="1.20 3.09" stroke-dashoffset="0.00"/><path d="M2.00 16.40H67.72" stroke="#8a6d2c" stroke-width="2.00" stroke-dasharray="1.10 1.04" stroke-dashoffset="0.00"/><path d="M3.00 22.90H67.72" stroke="#86692a" stroke-width="2.40" stroke-dasharray="1.80 2.49" stroke-dashoffset="0.00"/><path d="M4.00 31.40H67.72" stroke="#86692a" stroke-width="2.20" stroke-dasharray="1.20 3.09" stroke-dashoffset="0.00"/></svg><div class="ct">Arpeggio</div></div>
<div class="clip" style="left:265.80px;top:581.58px;width:67.92px;height:37.3px;background:linear-gradient(#a4b44c,#8b9b3f);box-shadow:inset 1px 0 0 rgba(255,255,255,0.28),inset -1px 0 0 rgba(255,255,255,0.12),inset 0 1px 0 rgba(255,255,255,0.13)"><div class="a" style="left:23.4px;top:6.9px;width:3.0px;height:2.1px;background:#6e8226"></div><div class="a" style="left:13.1px;top:12.1px;width:3.7px;height:2.1px;background:#6e8226"></div><div class="a" style="left:43.3px;top:6.9px;width:3.2px;height:2.1px;background:#6e8226"></div><div class="a" style="left:48.1px;top:4.1px;width:2.7px;height:2.1px;background:#6e8226"></div><div class="a" style="left:51.3px;top:12.1px;width:13.5px;height:2.1px;background:#6e8226"></div><div class="a" style="left:65.1px;top:6.9px;width:3.0px;height:2.1px;background:#6e8226"></div><div class="a" style="left:34.3px;top:17.4px;width:7.9px;height:2.1px;background:#6e8226"></div><div class="a" style="left:2.5px;top:25.3px;width:6.3px;height:2.1px;background:#6e8226"></div><div class="a" style="left:25.0px;top:30.1px;width:9.9px;height:2.1px;background:#6e8226"></div><div class="ct">Lead</div></div>
<div class="clip" style="left:608.60px;top:581.58px;width:68.72px;height:37.3px;background:linear-gradient(#a4b44c,#8b9b3f);box-shadow:inset 1px 0 0 rgba(255,255,255,0.28),inset -1px 0 0 rgba(255,255,255,0.12),inset 0 1px 0 rgba(255,255,255,0.13)"><div class="a" style="left:23.4px;top:6.9px;width:3.0px;height:2.1px;background:#6e8226"></div><div class="a" style="left:13.1px;top:12.1px;width:3.7px;height:2.1px;background:#6e8226"></div><div class="a" style="left:43.3px;top:6.9px;width:3.2px;height:2.1px;background:#6e8226"></div><div class="a" style="left:48.1px;top:4.1px;width:2.7px;height:2.1px;background:#6e8226"></div><div class="a" style="left:51.3px;top:12.1px;width:13.5px;height:2.1px;background:#6e8226"></div><div class="a" style="left:65.1px;top:6.9px;width:3.0px;height:2.1px;background:#6e8226"></div><div class="a" style="left:34.3px;top:17.4px;width:7.9px;height:2.1px;background:#6e8226"></div><div class="a" style="left:2.5px;top:25.3px;width:6.3px;height:2.1px;background:#6e8226"></div><div class="a" style="left:25.0px;top:30.1px;width:9.9px;height:2.1px;background:#6e8226"></div><div class="ct">Lead</div></div>
<div class="clip" style="left:746.04px;top:581.58px;width:68.72px;height:37.3px;background:linear-gradient(#a4b44c,#8b9b3f);box-shadow:inset 1px 0 0 rgba(255,255,255,0.28),inset -1px 0 0 rgba(255,255,255,0.12),inset 0 1px 0 rgba(255,255,255,0.13)"><div class="a" style="left:23.4px;top:6.9px;width:3.0px;height:2.1px;background:#6e8226"></div><div class="a" style="left:13.1px;top:12.1px;width:3.7px;height:2.1px;background:#6e8226"></div><div class="a" style="left:43.3px;top:6.9px;width:3.2px;height:2.1px;background:#6e8226"></div><div class="a" style="left:48.1px;top:4.1px;width:2.7px;height:2.1px;background:#6e8226"></div><div class="a" style="left:51.3px;top:12.1px;width:13.5px;height:2.1px;background:#6e8226"></div><div class="a" style="left:65.1px;top:6.9px;width:3.0px;height:2.1px;background:#6e8226"></div><div class="a" style="left:34.3px;top:17.4px;width:7.9px;height:2.1px;background:#6e8226"></div><div class="a" style="left:2.5px;top:25.3px;width:6.3px;height:2.1px;background:#6e8226"></div><div class="a" style="left:25.0px;top:30.1px;width:9.9px;height:2.1px;background:#6e8226"></div><div class="ct">Lead</div></div>
<div class="clip" style="left:265.80px;top:621.72px;width:67.92px;height:37.3px;background:linear-gradient(#78b444,#60983a);box-shadow:inset 1px 0 0 rgba(255,255,255,0.28),inset -1px 0 0 rgba(255,255,255,0.12),inset 0 1px 0 rgba(255,255,255,0.13)"><div class="a" style="left:17.1px;top:14.1px;width:8.3px;height:2.7px;background:#33761a"></div><div class="a" style="left:25.8px;top:20.1px;width:8.0px;height:2.7px;background:#33761a"></div><div class="ct">Strings_fill</div></div>
<div class="clip" style="left:608.60px;top:621.72px;width:68.72px;height:37.3px;background:linear-gradient(#78b444,#60983a);box-shadow:inset 1px 0 0 rgba(255,255,255,0.28),inset -1px 0 0 rgba(255,255,255,0.12),inset 0 1px 0 rgba(255,255,255,0.13)"><div class="a" style="left:17.1px;top:14.1px;width:8.3px;height:2.7px;background:#33761a"></div><div class="a" style="left:25.8px;top:20.1px;width:8.0px;height:2.7px;background:#33761a"></div><div class="ct">Strings_fill</div></div>
<div class="clip" style="left:677.32px;top:621.72px;width:68.72px;height:37.3px;background:linear-gradient(#78b444,#60983a);box-shadow:inset 1px 0 0 rgba(255,255,255,0.28),inset -1px 0 0 rgba(255,255,255,0.12),inset 0 1px 0 rgba(255,255,255,0.13)"><div class="a" style="left:17.1px;top:14.1px;width:8.3px;height:2.7px;background:#33761a"></div><div class="a" style="left:25.8px;top:20.1px;width:8.0px;height:2.7px;background:#33761a"></div><div class="ct">Strings_fill</div></div>
<div class="clip" style="left:746.04px;top:621.72px;width:68.72px;height:37.3px;background:linear-gradient(#78b444,#60983a);box-shadow:inset 1px 0 0 rgba(255,255,255,0.28),inset -1px 0 0 rgba(255,255,255,0.12),inset 0 1px 0 rgba(255,255,255,0.13)"><div class="a" style="left:17.1px;top:14.1px;width:8.3px;height:2.7px;background:#33761a"></div><div class="a" style="left:25.8px;top:20.1px;width:8.0px;height:2.7px;background:#33761a"></div><div class="ct">Strings_fill</div></div>
<div class="clip" style="left:883.48px;top:621.72px;width:68.72px;height:37.3px;background:linear-gradient(#78b444,#60983a);box-shadow:inset 1px 0 0 rgba(255,255,255,0.28),inset -1px 0 0 rgba(255,255,255,0.12),inset 0 1px 0 rgba(255,255,255,0.13)"><div class="a" style="left:17.1px;top:14.1px;width:8.3px;height:2.7px;background:#33761a"></div><div class="a" style="left:25.8px;top:20.1px;width:8.0px;height:2.7px;background:#33761a"></div><div class="ct">Strings_fill</div></div>
<div class="clip" style="left:265.80px;top:661.86px;width:67.92px;height:37.3px;background:linear-gradient(#4fae48,#3e913c);box-shadow:inset 1px 0 0 rgba(255,255,255,0.28),inset -1px 0 0 rgba(255,255,255,0.12),inset 0 1px 0 rgba(255,255,255,0.13)"><div class="a" style="left:2.8px;top:16.8px;width:14.0px;height:2.9px;background:#1d7b1d"></div><div class="ct">Noisefx</div></div>
<div class="clip" style="left:471.16px;top:661.86px;width:68.72px;height:37.3px;background:linear-gradient(#4fae48,#3e913c);box-shadow:inset 1px 0 0 rgba(255,255,255,0.28),inset -1px 0 0 rgba(255,255,255,0.12),inset 0 1px 0 rgba(255,255,255,0.13)"><div class="a" style="left:2.8px;top:16.8px;width:14.0px;height:2.9px;background:#1d7b1d"></div><div class="ct">Noisefx</div></div>
<div class="clip" style="left:539.88px;top:661.86px;width:68.72px;height:37.3px;background:linear-gradient(#4fae48,#3e913c);box-shadow:inset 1px 0 0 rgba(255,255,255,0.28),inset -1px 0 0 rgba(255,255,255,0.12),inset 0 1px 0 rgba(255,255,255,0.13)"><div class="a" style="left:2.8px;top:16.8px;width:14.0px;height:2.9px;background:#1d7b1d"></div><div class="ct">Noisefx</div></div>
<div class="clip" style="left:608.60px;top:661.86px;width:68.72px;height:37.3px;background:linear-gradient(#4fae48,#3e913c);box-shadow:inset 1px 0 0 rgba(255,255,255,0.28),inset -1px 0 0 rgba(255,255,255,0.12),inset 0 1px 0 rgba(255,255,255,0.13)"><div class="a" style="left:2.8px;top:16.8px;width:14.0px;height:2.9px;background:#1d7b1d"></div><div class="ct">Noisefx</div></div>
<div class="clip" style="left:677.32px;top:661.86px;width:68.72px;height:37.3px;background:linear-gradient(#4fae48,#3e913c);box-shadow:inset 1px 0 0 rgba(255,255,255,0.28),inset -1px 0 0 rgba(255,255,255,0.12),inset 0 1px 0 rgba(255,255,255,0.13)"><div class="a" style="left:2.8px;top:16.8px;width:14.0px;height:2.9px;background:#1d7b1d"></div><div class="ct">Noisefx</div></div>
<div class="clip" style="left:883.48px;top:661.86px;width:68.72px;height:37.3px;background:linear-gradient(#4fae48,#3e913c);box-shadow:inset 1px 0 0 rgba(255,255,255,0.28),inset -1px 0 0 rgba(255,255,255,0.12),inset 0 1px 0 rgba(255,255,255,0.13)"><div class="a" style="left:2.8px;top:16.8px;width:14.0px;height:2.9px;background:#1d7b1d"></div><div class="ct">Noisefx</div></div>
<div class="clip" style="left:952.20px;top:661.86px;width:68.72px;height:37.3px;background:linear-gradient(#4fae48,#3e913c);box-shadow:inset 1px 0 0 rgba(255,255,255,0.28),inset -1px 0 0 rgba(255,255,255,0.12),inset 0 1px 0 rgba(255,255,255,0.13)"><div class="a" style="left:2.8px;top:16.8px;width:14.0px;height:2.9px;background:#1d7b1d"></div><div class="ct">Noisefx</div></div>
<div class="a" style="left:262px;top:69px;width:2px;height:698px;background:#858a92"></div>
<div class="a" style="left:264px;top:69px;width:1.5px;height:698px;background:#0a0b0d"></div>
<div class="a" style="left:383px;top:757.4px;width:257.7px;height:3.8px;border-radius:1.9px;background:#5a5f67"></div>
</div></body></html>
